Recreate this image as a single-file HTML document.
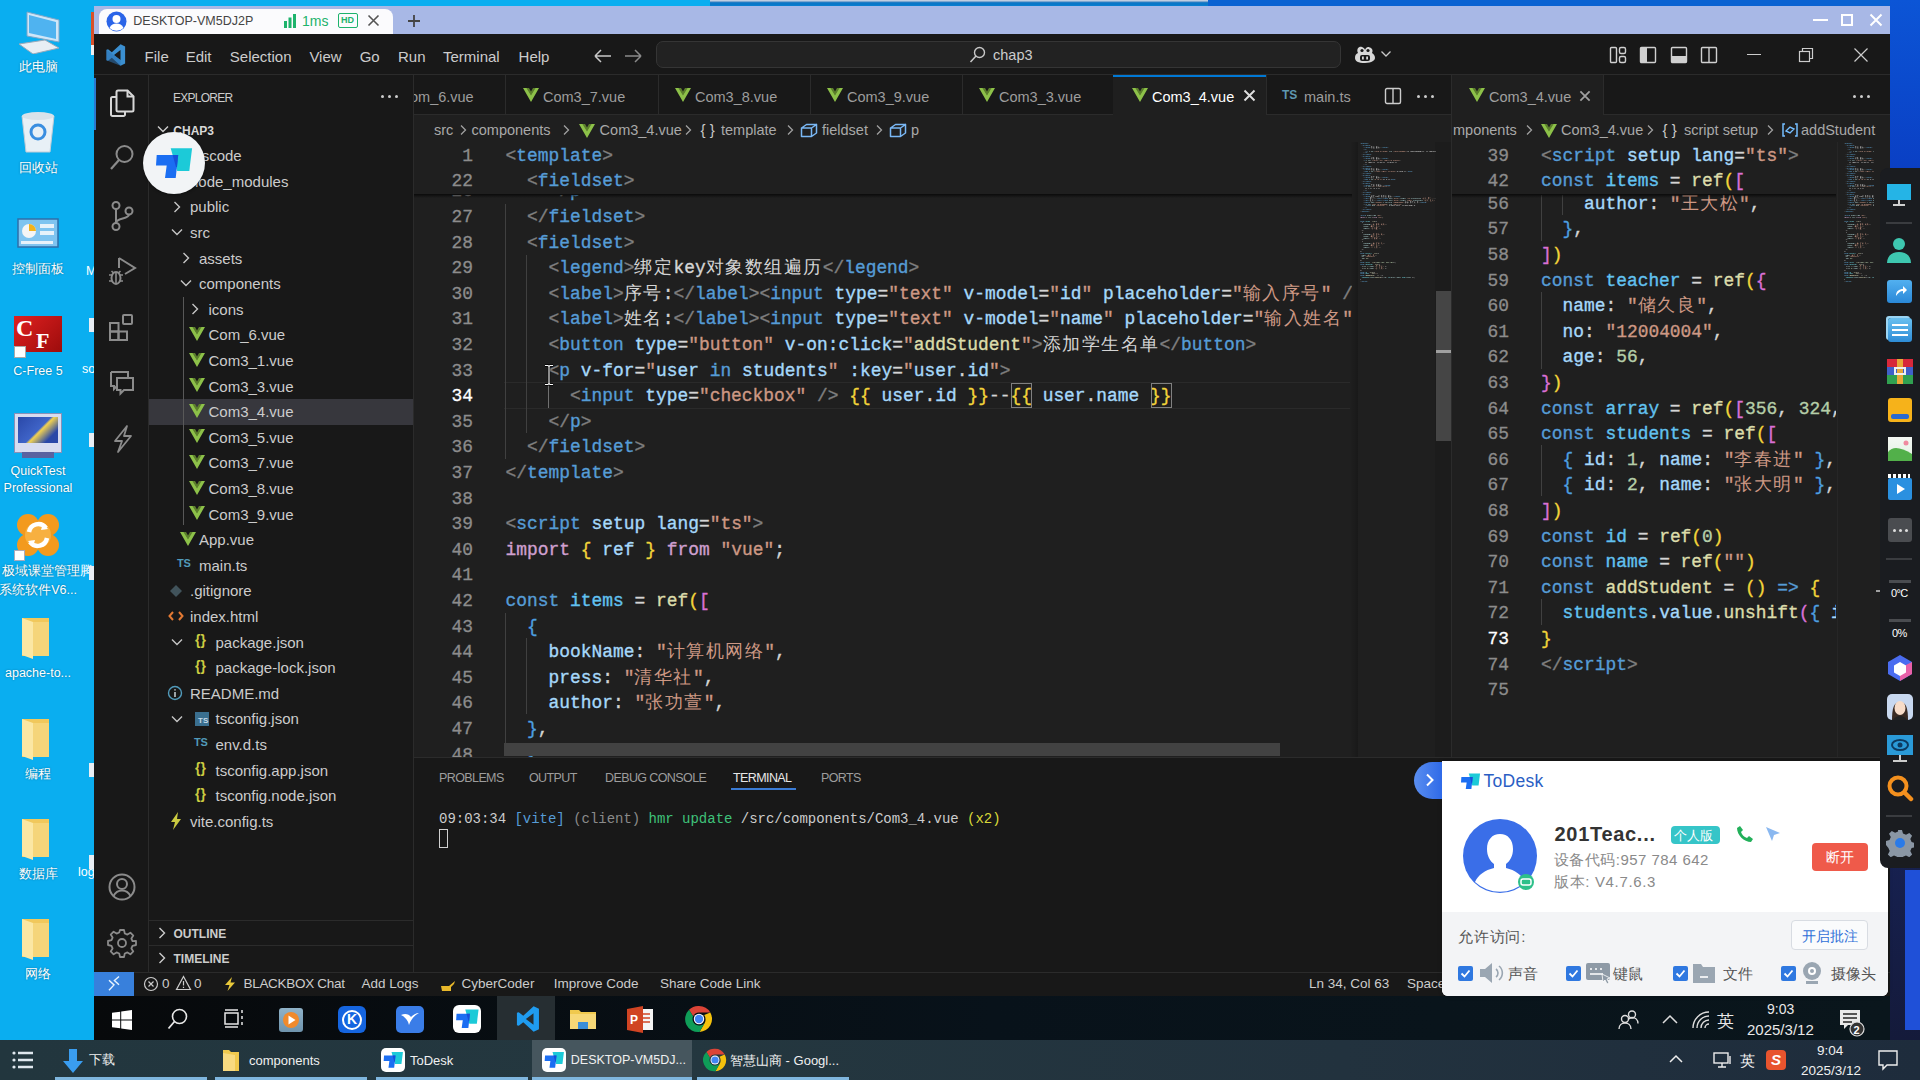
<!DOCTYPE html>
<html><head><meta charset="utf-8">
<style>
*{margin:0;padding:0;box-sizing:border-box}
html,body{width:1920px;height:1080px;overflow:hidden}
body{position:relative;background:#0aaef0;font-family:"Liberation Sans",sans-serif;color:#ccc}
.a{position:absolute}
.t{position:absolute;white-space:pre;line-height:1}
.mono{font-family:"Liberation Mono",monospace}
/* code */
.ln{position:absolute;white-space:pre;font-family:"Liberation Mono",monospace;font-size:17.9px;line-height:25.6px;height:25.6px;color:#d4d4d4;-webkit-text-stroke:0.35px currentColor}
.num{position:absolute;white-space:pre;font-family:"Liberation Mono",monospace;font-size:17.9px;line-height:25.6px;color:#8c8c8c;text-align:right;width:60px;-webkit-text-stroke:0.3px currentColor}
.p{color:#808080}.tg{color:#569cd6}.at{color:#a6d8fa}.s{color:#cd9884}.k{color:#569cd6}.im{color:#d0a0d0}
.v{color:#62c2f0}.f{color:#dcdcaa}.b1{color:#f2d43a}.b2{color:#da70d6}.b3{color:#4d9fe0}.n{color:#b5cea8}.w{color:#d4d4d4}
.c{letter-spacing:1.5px;-webkit-text-stroke:0}
</style></head><body>

<!-- top strip -->
<div class="a" style="left:0;top:0;width:1920px;height:6px;background:#0aaef0"></div>
<div class="a" style="left:710px;top:0;width:498px;height:6px;background:linear-gradient(#c0cee0 0,#c0cee0 1px,#3a80c0 2px,#0a78c8 3px,#0a78c8 5px,#0a84d8 6px)"></div>
<div class="a" style="left:1208px;top:0;width:712px;height:6px;background:#0a62d2"></div>
<div class="a" style="left:1890px;top:0;width:30px;height:170px;background:linear-gradient(#0c55d6,#0a3fc4)"></div>

<!-- ToDesk window top -->
<div class="a" style="left:94px;top:6px;width:1796px;height:28px;background:#a8b8e6"></div>
<div class="a" style="left:99px;top:9px;width:294px;height:25px;background:#fbfbfd;border-radius:8px 8px 0 0"></div>

<svg class="a" style="left:15px;top:10px" width="46" height="44" viewBox="0 0 46 44"><path d="M12 2 44 10v22L12 26z" fill="#cfe6f8" stroke="#7fa6c8"/><path d="M14 5 41 12v17L14 23z" fill="#4fb3f0"/><path d="M4 34 30 30 44 38 18 44z" fill="#e8eef4" stroke="#9ab"/></svg>
<div class="t" style="left:-9px;width:94px;text-align:center;top:60.6px;font-size:12.5px;color:#fff;text-shadow:0 0 2px #0006">此电脑</div>
<svg class="a" style="left:19px;top:108px" width="38" height="46" viewBox="0 0 38 46"><path d="M3 8h32l-4 36H7z" fill="#e8f0f6" stroke="#c2ccd6"/><ellipse cx="19" cy="8" rx="16" ry="4" fill="#d8e2ea"/><circle cx="19" cy="24" r="7" fill="none" stroke="#3a8ee0" stroke-width="3"/></svg>
<div class="t" style="left:-9px;width:94px;text-align:center;top:161.6px;font-size:12.5px;color:#fff;text-shadow:0 0 2px #0006">回收站</div>
<svg class="a" style="left:17px;top:218px" width="42" height="30" viewBox="0 0 42 30"><rect x="1" y="1" width="40" height="28" fill="#7fc4f0" stroke="#2f6fa8" stroke-width="1.5"/><circle cx="12" cy="13" r="7" fill="#f5f5f5"/><path d="M12 13V6a7 7 0 0 1 7 7z" fill="#f2b31c"/><rect x="23" y="6" width="14" height="4" fill="#e8f2fa"/><rect x="23" y="13" width="14" height="4" fill="#e8f2fa"/><rect x="4" y="23" width="32" height="3" fill="#e8f2fa"/></svg>
<div class="t" style="left:-9px;width:94px;text-align:center;top:262.6px;font-size:12.5px;color:#fff;text-shadow:0 0 2px #0006">控制面板</div>
<div class="a" style="left:14px;top:316px;width:48px;height:36px;background:linear-gradient(135deg,#e02020,#9c0c0c)"></div>
<div class="t" style="left:16px;top:316px;font-family:'Liberation Serif',serif;font-size:24px;font-weight:bold;color:#fff">C</div>
<div class="t" style="left:36px;top:330px;font-family:'Liberation Serif',serif;font-size:22px;font-weight:bold;color:#fff">F</div>
<div class="a" style="left:14px;top:346px;width:12px;height:12px;background:#fff;border:1px solid #aaa"></div>
<div class="t" style="left:-9px;width:94px;text-align:center;top:364.6px;font-size:12.5px;color:#fff;text-shadow:0 0 2px #0006">C-Free 5</div>
<div class="t " style="left:82.0px;top:363.4px;font-size:12.5px;color:#fff;">so</div>
<div class="a" style="left:14px;top:413px;width:48px;height:40px;background:#d8dcf0;border:1px solid #8890b8"></div>
<div class="a" style="left:18px;top:417px;width:40px;height:26px;background:linear-gradient(135deg,#2a48a8,#3f64c8 50%,#f2d250 55%,#2a48a8 80%)"></div>
<div class="a" style="left:22px;top:452px;width:32px;height:6px;background:#5a62a0"></div>
<div class="t" style="left:-9px;width:94px;text-align:center;top:464.6px;font-size:12.5px;color:#fff;text-shadow:0 0 2px #0006">QuickTest</div>
<div class="t" style="left:-9px;width:94px;text-align:center;top:481.6px;font-size:12.5px;color:#fff;text-shadow:0 0 2px #0006">Professional</div>
<svg class="a" style="left:14px;top:512px" width="48" height="46" viewBox="0 0 48 46"><g fill="#f39a1e"><circle cx="14" cy="13" r="11"/><circle cx="34" cy="13" r="11"/><circle cx="14" cy="33" r="11"/><circle cx="34" cy="33" r="11"/><circle cx="24" cy="23" r="14"/></g><circle cx="24" cy="23" r="13" fill="#f7b040"/><path d="M15 20a9.5 9.5 0 0 1 17-4M33 26a9.5 9.5 0 0 1-17 4" stroke="#fff" stroke-width="4.5" fill="none"/><path d="M29 11l5 6-7 1zM19 35l-5-6 7-1z" fill="#fff"/></svg>
<div class="a" style="left:14px;top:550px;width:11px;height:11px;background:#fff;border:1px solid #aab"></div>
<div class="t " style="left:2.0px;top:565.4px;font-size:12.5px;color:#fff;text-shadow:0 0 2px #0006">极域课堂管理</div>
<div class="t " style="left:80.0px;top:565.4px;font-size:12.5px;color:#fff;">腾</div>
<div class="t" style="left:-9px;width:94px;text-align:center;top:583.6px;font-size:12.5px;color:#fff;text-shadow:0 0 2px #0006">系统软件V6...</div>
<svg class="a" style="left:21px;top:617px" width="30" height="42" viewBox="0 0 30 42"><path d="M1 1h27v38H1z" fill="#f1c85c"/><path d="M1 1l11 4v37L1 38z" fill="#fbe7a4"/><path d="M12 5h16v34H12z" fill="#f5d57a"/></svg>
<div class="t" style="left:-9px;width:94px;text-align:center;top:666.6px;font-size:12.5px;color:#fff;text-shadow:0 0 2px #0006">apache-to...</div>
<svg class="a" style="left:21px;top:718px" width="30" height="42" viewBox="0 0 30 42"><path d="M1 1h27v38H1z" fill="#f1c85c"/><path d="M1 1l11 4v37L1 38z" fill="#fbe7a4"/><path d="M12 5h16v34H12z" fill="#f5d57a"/></svg>
<div class="t" style="left:-9px;width:94px;text-align:center;top:767.6px;font-size:12.5px;color:#fff;text-shadow:0 0 2px #0006">编程</div>
<svg class="a" style="left:21px;top:818px" width="30" height="42" viewBox="0 0 30 42"><path d="M1 1h27v38H1z" fill="#f1c85c"/><path d="M1 1l11 4v37L1 38z" fill="#fbe7a4"/><path d="M12 5h16v34H12z" fill="#f5d57a"/></svg>
<div class="t" style="left:-9px;width:94px;text-align:center;top:867.6px;font-size:12.5px;color:#fff;text-shadow:0 0 2px #0006">数据库</div>
<svg class="a" style="left:21px;top:918px" width="30" height="42" viewBox="0 0 30 42"><path d="M1 1h27v38H1z" fill="#f1c85c"/><path d="M1 1l11 4v37L1 38z" fill="#fbe7a4"/><path d="M12 5h16v34H12z" fill="#f5d57a"/></svg>
<div class="t" style="left:-9px;width:94px;text-align:center;top:967.6px;font-size:12.5px;color:#fff;text-shadow:0 0 2px #0006">网络</div>
<div class="t " style="left:78.0px;top:866.4px;font-size:12.5px;color:#fff;">log</div>
<div class="a" style="left:91px;top:12px;width:3px;height:38px;background:#d8502a;"></div>
<div class="a" style="left:91px;top:45px;width:3px;height:10px;background:#f0f0f0;"></div>
<div class="a" style="left:89px;top:318px;width:5px;height:14px;background:#e8eef4;"></div>
<div class="a" style="left:89px;top:433px;width:5px;height:14px;background:#e8eef4;"></div>
<div class="a" style="left:89px;top:566px;width:5px;height:14px;background:#e8eef4;"></div>
<div class="a" style="left:89px;top:763px;width:5px;height:14px;background:#e8eef4;"></div>
<div class="a" style="left:89px;top:855px;width:5px;height:14px;background:#e8eef4;"></div>
<div class="t " style="left:86.0px;top:265.4px;font-size:12.5px;color:#fff;">M</div>
<div class="a" style="left:94px;top:34px;width:1796px;height:41px;background:#181818;"></div>
<div class="a" style="left:94px;top:74px;width:1796px;height:1px;background:#2b2b2b;"></div>
<svg class="a" style="left:104px;top:44px" width="22" height="22" viewBox="0 0 100 100">
<path d="M96 10.8 75.4 1 35.6 37.3 18.3 24.2 11.2 26.4v47.2l7.1 2.2 17.3-13.1L75.4 99 96 89.2V10.8zM75 27.8v44.4L45.6 50 75 27.8z" fill="#3b8fd0"/>
<path d="M11.2 26.4 75 72.2v26.8L11.2 73.6z" fill="#2f74b5" opacity=".55"/></svg>
<div class="t " style="left:144.6px;top:48.8px;font-size:15px;color:#cccccc;">File</div>
<div class="t " style="left:185.7px;top:48.8px;font-size:15px;color:#cccccc;">Edit</div>
<div class="t " style="left:229.8px;top:48.8px;font-size:15px;color:#cccccc;">Selection</div>
<div class="t " style="left:309.4px;top:48.8px;font-size:15px;color:#cccccc;">View</div>
<div class="t " style="left:359.7px;top:48.8px;font-size:15px;color:#cccccc;">Go</div>
<div class="t " style="left:398.0px;top:48.8px;font-size:15px;color:#cccccc;">Run</div>
<div class="t " style="left:443.0px;top:48.8px;font-size:15px;color:#cccccc;">Terminal</div>
<div class="t " style="left:518.6px;top:48.8px;font-size:15px;color:#cccccc;">Help</div>
<svg class="a" style="left:592px;top:46px" width="22" height="20" viewBox="0 0 22 20"><path d="M3 10h16M3 10l6-6M3 10l6 6" stroke="#c8c8c8" stroke-width="1.5" fill="none"/></svg>
<svg class="a" style="left:622px;top:46px" width="22" height="20" viewBox="0 0 22 20"><path d="M3 10h16M19 10l-6-6M19 10l-6 6" stroke="#8a8a8a" stroke-width="1.5" fill="none"/></svg>
<div class="a" style="left:656px;top:41px;width:685px;height:27px;background:#222222;border:1px solid #353535;border-radius:7px"></div>
<svg class="a" style="left:969px;top:46px" width="17" height="18" viewBox="0 0 17 18"><circle cx="10.5" cy="6.5" r="5" stroke="#c8c8c8" stroke-width="1.4" fill="none"/><path d="M7 10 1.5 16" stroke="#c8c8c8" stroke-width="1.5"/></svg>
<div class="t " style="left:993.0px;top:48.2px;font-size:14.5px;color:#cccccc;">chap3</div>
<svg class="a" style="left:1354px;top:45px" width="22" height="20" viewBox="0 0 22 20"><path d="M4 8C2 4 5 1 8 2s3 3 3 3 1-3 3-3 6 2 4 6c2 1 3 3 3 5s-3 5-10 5-10-2-10-5 1-4 3-5z" fill="#d8d8d8"/><rect x="6" y="10" width="10" height="6" rx="2" fill="#181818"/><rect x="8" y="11.5" width="1.8" height="3" fill="#d8d8d8"/><rect x="12.2" y="11.5" width="1.8" height="3" fill="#d8d8d8"/><circle cx="8" cy="5.5" r="1.6" fill="#181818"/><circle cx="14" cy="5.5" r="1.6" fill="#181818"/></svg>
<svg class="a" style="left:1380px;top:50px" width="12" height="8" viewBox="0 0 12 8"><path d="M1.5 1.5 6 6l4.5-4.5" stroke="#c8c8c8" stroke-width="1.3" fill="none"/></svg>
<svg class="a" style="left:1608px;top:45px" width="20" height="20" viewBox="0 0 20 20"><rect x="2.5" y="2.5" width="6" height="15" rx="1" stroke="#d0d0d0" stroke-width="1.4" fill="none"/><rect x="11.5" y="2.5" width="6" height="6" rx="1.5" stroke="#d0d0d0" stroke-width="1.4" fill="none"/><rect x="11.5" y="11.5" width="6" height="6" rx="1.5" stroke="#d0d0d0" stroke-width="1.4" fill="none"/></svg>
<svg class="a" style="left:1638px;top:45px" width="20" height="20" viewBox="0 0 20 20"><rect x="2.5" y="2.5" width="15" height="15" rx="1" stroke="#d0d0d0" stroke-width="1.4" fill="none"/><rect x="2.5" y="2.5" width="6.5" height="15" fill="#d0d0d0"/></svg>
<svg class="a" style="left:1669px;top:45px" width="20" height="20" viewBox="0 0 20 20"><rect x="2.5" y="2.5" width="15" height="15" rx="1" stroke="#d0d0d0" stroke-width="1.4" fill="none"/><rect x="2.5" y="11" width="15" height="6.5" fill="#d0d0d0"/></svg>
<svg class="a" style="left:1699px;top:45px" width="20" height="20" viewBox="0 0 20 20"><rect x="2.5" y="2.5" width="15" height="15" rx="1" stroke="#d0d0d0" stroke-width="1.4" fill="none"/><path d="M10 2.5v15" stroke="#d0d0d0" stroke-width="1.4"/></svg>
<div class="a" style="left:1747px;top:54px;width:14px;height:1px;background:#cccccc;"></div>
<svg class="a" style="left:1798px;top:47px" width="16" height="16" viewBox="0 0 16 16"><rect x="1.5" y="4.5" width="10" height="10" stroke="#cccccc" stroke-width="1.2" fill="none"/><path d="M4.5 4.5V1.5h10v10h-3" stroke="#cccccc" stroke-width="1.2" fill="none"/></svg>
<svg class="a" style="left:1853px;top:47px" width="16" height="16" viewBox="0 0 16 16"><path d="M1.5 1.5l13 13M14.5 1.5l-13 13" stroke="#cccccc" stroke-width="1.2"/></svg>
<div class="a" style="left:94px;top:75px;width:55px;height:897px;background:#181818;"></div>
<div class="a" style="left:148px;top:75px;width:1px;height:897px;background:#2b2b2b;"></div>
<div class="a" style="left:94px;top:78px;width:2px;height:52px;background:#2a78d0;"></div>
<svg class="a" style="left:108px;top:88px" width="28" height="30" viewBox="0 0 28 30"><path d="M9 9H4.5a1.5 1.5 0 0 0-1.5 1.5v16A1.5 1.5 0 0 0 4.5 28h11a1.5 1.5 0 0 0 1.5-1.5V24" stroke="#d7d7d7" stroke-width="2" fill="none"/><path d="M9.5 2.5h10l6 6v13.5a1.5 1.5 0 0 1-1.5 1.5h-14a1.5 1.5 0 0 1-1.5-1.5V4a1.5 1.5 0 0 1 1.5-1.5z" stroke="#d7d7d7" stroke-width="2" fill="none"/><path d="M19.5 2.5v6h6" stroke="#d7d7d7" stroke-width="2" fill="none"/></svg>
<svg class="a" style="left:108px;top:143px" width="28" height="30" viewBox="0 0 28 30"><circle cx="16.5" cy="11" r="8" stroke="#8b8b8b" stroke-width="2" fill="none"/><path d="M11 17 3 26" stroke="#8b8b8b" stroke-width="2.2"/></svg>
<svg class="a" style="left:108px;top:200px" width="28" height="32" viewBox="0 0 28 32"><circle cx="8" cy="5.5" r="3.5" stroke="#8b8b8b" stroke-width="2" fill="none"/><circle cx="8" cy="26.5" r="3.5" stroke="#8b8b8b" stroke-width="2" fill="none"/><circle cx="21" cy="11" r="3.5" stroke="#8b8b8b" stroke-width="2" fill="none"/><path d="M8 9v14M21 14.5c0 5-13 3-13 8.5" stroke="#8b8b8b" stroke-width="2" fill="none"/></svg>
<svg class="a" style="left:107px;top:255px" width="30" height="32" viewBox="0 0 30 32"><path d="M12 3v10M12 3l16 10-10 6" stroke="#8b8b8b" stroke-width="2" fill="none"/><ellipse cx="9" cy="23" rx="4.5" ry="6" stroke="#8b8b8b" stroke-width="2" fill="none"/><path d="M2 20h3M13 20h3M2 26h3M13 26h3M4.5 16l2 2M13.5 16l-2 2M9 17v12" stroke="#8b8b8b" stroke-width="1.6"/></svg>
<svg class="a" style="left:108px;top:313px" width="28" height="30" viewBox="0 0 28 30"><rect x="2" y="10" width="8.5" height="8.5" stroke="#8b8b8b" stroke-width="2" fill="none"/><rect x="2" y="18.5" width="8.5" height="8.5" stroke="#8b8b8b" stroke-width="2" fill="none"/><rect x="10.5" y="18.5" width="8.5" height="8.5" stroke="#8b8b8b" stroke-width="2" fill="none"/><rect x="15" y="2" width="9" height="9" rx="1" stroke="#8b8b8b" stroke-width="2" fill="none"/></svg>
<svg class="a" style="left:108px;top:369px" width="28" height="30" viewBox="0 0 28 30"><path d="M3 3h17v5M3 3v14h3v3l3-3" stroke="#8b8b8b" stroke-width="2" fill="none"/><path d="M9 9h16v12H16l-3.5 3.5V21H9z" stroke="#8b8b8b" stroke-width="2" fill="none"/></svg>
<svg class="a" style="left:110px;top:424px" width="26" height="30" viewBox="0 0 26 30"><path d="M17 2 5 17h7l-4 11 13-16h-7z" stroke="#8b8b8b" stroke-width="1.8" fill="none" stroke-linejoin="round"/></svg>
<svg class="a" style="left:107px;top:872px" width="30" height="30" viewBox="0 0 30 30"><circle cx="15" cy="15" r="12.5" stroke="#8b8b8b" stroke-width="2" fill="none"/><circle cx="15" cy="12" r="5" stroke="#8b8b8b" stroke-width="2" fill="none"/><path d="M6.5 24c2-4 5-5.5 8.5-5.5s6.5 1.5 8.5 5.5" stroke="#8b8b8b" stroke-width="2" fill="none"/></svg>
<svg class="a" style="left:107px;top:928px" width="30" height="30" viewBox="0 0 30 30"><path d="M13 2h4l.8 3.5 2.6 1.1 3-1.9 2.9 2.9-1.9 3 1.1 2.6L29 13v4l-3.5.8-1.1 2.6 1.9 3-2.9 2.9-3-1.9-2.6 1.1L17 29h-4l-.8-3.5-2.6-1.1-3 1.9-2.9-2.9 1.9-3-1.1-2.6L1 17v-4l3.5-.8 1.1-2.6-1.9-3 2.9-2.9 3 1.9 2.6-1.1z" stroke="#8b8b8b" stroke-width="1.8" fill="none" stroke-linejoin="round"/><circle cx="15" cy="15" r="4" stroke="#8b8b8b" stroke-width="1.8" fill="none"/></svg>
<div class="a" style="left:149px;top:75px;width:265px;height:897px;background:#181818;"></div>
<div class="a" style="left:413px;top:75px;width:1px;height:897px;background:#2b2b2b;"></div>
<div class="t " style="left:173.0px;top:91.6px;font-size:12px;color:#cccccc;letter-spacing:-0.75px;">EXPLORER</div>
<div class="a" style="left:381px;top:95px;width:3px;height:3px;background:#cccccc;border-radius:50%"></div>
<div class="a" style="left:388px;top:95px;width:3px;height:3px;background:#cccccc;border-radius:50%"></div>
<div class="a" style="left:395px;top:95px;width:3px;height:3px;background:#cccccc;border-radius:50%"></div>
<svg class="a" style="left:155px;top:124px" width="16" height="10" viewBox="0 0 16 10"><path d="M3 2.5 8 7.5 13 2.5" stroke="#cccccc" stroke-width="1.4" fill="none"/></svg>
<div class="t " style="left:173.3px;top:125.0px;font-size:12px;color:#d8d8d8;font-weight:bold;">CHAP3</div>
<div class="a" style="left:149px;top:399px;width:264px;height:26px;background:#37373d;"></div>
<div class="a" style="left:183px;top:297px;width:1px;height:228px;background:#585858;"></div>
<svg class="a" style="left:172px;top:147.3px" width="10" height="16" viewBox="0 0 10 16"><path d="M2.5 3 7.5 8 2.5 13" stroke="#c5c5c5" stroke-width="1.4" fill="none"/></svg>
<div class="t " style="left:190.0px;top:148.1px;font-size:15px;color:#cccccc;">.vscode</div>
<svg class="a" style="left:172px;top:172.9px" width="10" height="16" viewBox="0 0 10 16"><path d="M2.5 3 7.5 8 2.5 13" stroke="#c5c5c5" stroke-width="1.4" fill="none"/></svg>
<div class="t " style="left:190.0px;top:173.7px;font-size:15px;color:#cccccc;">node_modules</div>
<svg class="a" style="left:172px;top:198.5px" width="10" height="16" viewBox="0 0 10 16"><path d="M2.5 3 7.5 8 2.5 13" stroke="#c5c5c5" stroke-width="1.4" fill="none"/></svg>
<div class="t " style="left:190.0px;top:199.3px;font-size:15px;color:#cccccc;">public</div>
<svg class="a" style="left:169px;top:227.10000000000002px" width="16" height="10" viewBox="0 0 16 10"><path d="M3 2.5 8 7.5 13 2.5" stroke="#c5c5c5" stroke-width="1.4" fill="none"/></svg>
<div class="t " style="left:190.0px;top:224.9px;font-size:15px;color:#cccccc;">src</div>
<svg class="a" style="left:181px;top:249.70000000000005px" width="10" height="16" viewBox="0 0 10 16"><path d="M2.5 3 7.5 8 2.5 13" stroke="#c5c5c5" stroke-width="1.4" fill="none"/></svg>
<div class="t " style="left:199.0px;top:250.5px;font-size:15px;color:#cccccc;">assets</div>
<svg class="a" style="left:178px;top:278.3px" width="16" height="10" viewBox="0 0 16 10"><path d="M3 2.5 8 7.5 13 2.5" stroke="#c5c5c5" stroke-width="1.4" fill="none"/></svg>
<div class="t " style="left:199.0px;top:276.1px;font-size:15px;color:#cccccc;">components</div>
<svg class="a" style="left:190px;top:300.90000000000003px" width="10" height="16" viewBox="0 0 10 16"><path d="M2.5 3 7.5 8 2.5 13" stroke="#c5c5c5" stroke-width="1.4" fill="none"/></svg>
<div class="t " style="left:208.5px;top:301.7px;font-size:15px;color:#cccccc;">icons</div>
<svg class="a" style="left:189px;top:327.0px" width="16" height="15" viewBox="0 0 16 15"><path d="M0 0h4.2L8 6.4 11.8 0H16L8 14z" fill="#8dc149"/><path d="M3.4 0h2.6L8 3.4 10 0h2.6L8 7.6z" fill="#5c7f2c"/></svg>
<div class="t " style="left:208.5px;top:327.3px;font-size:15px;color:#cccccc;">Com_6.vue</div>
<svg class="a" style="left:189px;top:352.6px" width="16" height="15" viewBox="0 0 16 15"><path d="M0 0h4.2L8 6.4 11.8 0H16L8 14z" fill="#8dc149"/><path d="M3.4 0h2.6L8 3.4 10 0h2.6L8 7.6z" fill="#5c7f2c"/></svg>
<div class="t " style="left:208.5px;top:352.9px;font-size:15px;color:#cccccc;">Com3_1.vue</div>
<svg class="a" style="left:189px;top:378.20000000000005px" width="16" height="15" viewBox="0 0 16 15"><path d="M0 0h4.2L8 6.4 11.8 0H16L8 14z" fill="#8dc149"/><path d="M3.4 0h2.6L8 3.4 10 0h2.6L8 7.6z" fill="#5c7f2c"/></svg>
<div class="t " style="left:208.5px;top:378.5px;font-size:15px;color:#cccccc;">Com3_3.vue</div>
<svg class="a" style="left:189px;top:403.8px" width="16" height="15" viewBox="0 0 16 15"><path d="M0 0h4.2L8 6.4 11.8 0H16L8 14z" fill="#8dc149"/><path d="M3.4 0h2.6L8 3.4 10 0h2.6L8 7.6z" fill="#5c7f2c"/></svg>
<div class="t " style="left:208.5px;top:404.1px;font-size:15px;color:#cccccc;">Com3_4.vue</div>
<svg class="a" style="left:189px;top:429.40000000000003px" width="16" height="15" viewBox="0 0 16 15"><path d="M0 0h4.2L8 6.4 11.8 0H16L8 14z" fill="#8dc149"/><path d="M3.4 0h2.6L8 3.4 10 0h2.6L8 7.6z" fill="#5c7f2c"/></svg>
<div class="t " style="left:208.5px;top:429.7px;font-size:15px;color:#cccccc;">Com3_5.vue</div>
<svg class="a" style="left:189px;top:455.00000000000006px" width="16" height="15" viewBox="0 0 16 15"><path d="M0 0h4.2L8 6.4 11.8 0H16L8 14z" fill="#8dc149"/><path d="M3.4 0h2.6L8 3.4 10 0h2.6L8 7.6z" fill="#5c7f2c"/></svg>
<div class="t " style="left:208.5px;top:455.3px;font-size:15px;color:#cccccc;">Com3_7.vue</div>
<svg class="a" style="left:189px;top:480.6px" width="16" height="15" viewBox="0 0 16 15"><path d="M0 0h4.2L8 6.4 11.8 0H16L8 14z" fill="#8dc149"/><path d="M3.4 0h2.6L8 3.4 10 0h2.6L8 7.6z" fill="#5c7f2c"/></svg>
<div class="t " style="left:208.5px;top:480.9px;font-size:15px;color:#cccccc;">Com3_8.vue</div>
<svg class="a" style="left:189px;top:506.20000000000005px" width="16" height="15" viewBox="0 0 16 15"><path d="M0 0h4.2L8 6.4 11.8 0H16L8 14z" fill="#8dc149"/><path d="M3.4 0h2.6L8 3.4 10 0h2.6L8 7.6z" fill="#5c7f2c"/></svg>
<div class="t " style="left:208.5px;top:506.5px;font-size:15px;color:#cccccc;">Com3_9.vue</div>
<svg class="a" style="left:180px;top:531.8px" width="16" height="15" viewBox="0 0 16 15"><path d="M0 0h4.2L8 6.4 11.8 0H16L8 14z" fill="#8dc149"/><path d="M3.4 0h2.6L8 3.4 10 0h2.6L8 7.6z" fill="#5c7f2c"/></svg>
<div class="t " style="left:199.0px;top:532.1px;font-size:15px;color:#cccccc;">App.vue</div>
<div class="t" style="left:177px;top:557.9000000000001px;font-size:11px;font-weight:bold;color:#519aba;letter-spacing:-0.3px">TS</div>
<div class="t " style="left:199.0px;top:557.7px;font-size:15px;color:#cccccc;">main.ts</div>
<svg class="a" style="left:169px;top:583.5px" width="14" height="14" viewBox="0 0 14 14"><path d="M7 1 13 7 7 13 1 7z" fill="#41535b"/></svg>
<div class="t " style="left:190.0px;top:583.3px;font-size:15px;color:#cccccc;">.gitignore</div>
<svg class="a" style="left:168px;top:610.1px" width="16" height="12" viewBox="0 0 16 12"><path d="M5 2 1.5 6 5 10M11 2l3.5 4L11 10" stroke="#e37933" stroke-width="2" fill="none"/></svg>
<div class="t " style="left:190.0px;top:608.9px;font-size:15px;color:#cccccc;">index.html</div>
<svg class="a" style="left:169px;top:636.7px" width="16" height="10" viewBox="0 0 16 10"><path d="M3 2.5 8 7.5 13 2.5" stroke="#c5c5c5" stroke-width="1.4" fill="none"/></svg>
<div class="t" style="left:195px;top:633.2px;font-size:14px;font-weight:bold;color:#cbcb41">{}</div>
<div class="t " style="left:215.5px;top:634.5px;font-size:15px;color:#cccccc;">package.json</div>
<div class="t" style="left:195px;top:658.8px;font-size:14px;font-weight:bold;color:#cbcb41">{}</div>
<div class="t " style="left:215.5px;top:660.1px;font-size:15px;color:#cccccc;">package-lock.json</div>
<svg class="a" style="left:167px;top:684.9px" width="16" height="16" viewBox="0 0 16 16"><circle cx="8" cy="8" r="6.5" stroke="#519aba" stroke-width="1.4" fill="none"/><path d="M8 7v5M8 4.2v1.3" stroke="#c0c8cc" stroke-width="1.6"/></svg>
<div class="t " style="left:190.0px;top:685.7px;font-size:15px;color:#cccccc;">README.md</div>
<svg class="a" style="left:169px;top:713.5px" width="16" height="10" viewBox="0 0 16 10"><path d="M3 2.5 8 7.5 13 2.5" stroke="#c5c5c5" stroke-width="1.4" fill="none"/></svg>
<div class="a" style="left:195px;top:711.5px;width:14px;height:14px;background:#3a6f8f"><div class="t" style="left:3px;top:5px;font-size:8px;font-weight:bold;color:#c6dbe8">TS</div></div>
<div class="t " style="left:215.5px;top:711.3px;font-size:15px;color:#cccccc;">tsconfig.json</div>
<div class="t" style="left:194px;top:737.1000000000001px;font-size:11px;font-weight:bold;color:#519aba;letter-spacing:-0.3px">TS</div>
<div class="t " style="left:215.5px;top:736.9px;font-size:15px;color:#cccccc;">env.d.ts</div>
<div class="t" style="left:195px;top:761.2px;font-size:14px;font-weight:bold;color:#cbcb41">{}</div>
<div class="t " style="left:215.5px;top:762.5px;font-size:15px;color:#cccccc;">tsconfig.app.json</div>
<div class="t" style="left:195px;top:786.8px;font-size:14px;font-weight:bold;color:#cbcb41">{}</div>
<div class="t " style="left:215.5px;top:788.1px;font-size:15px;color:#cccccc;">tsconfig.node.json</div>
<svg class="a" style="left:170px;top:811.9px" width="12" height="18" viewBox="0 0 12 18"><path d="M8 0 1 10h4l-2 8 8-11H7z" fill="#cbcb41"/></svg>
<div class="t " style="left:190.0px;top:813.7px;font-size:15px;color:#cccccc;">vite.config.ts</div>
<div class="a" style="left:149px;top:920px;width:264px;height:1px;background:#2b2b2b;"></div>
<div class="a" style="left:149px;top:945px;width:264px;height:1px;background:#2b2b2b;"></div>
<svg class="a" style="left:157px;top:924.5px" width="10" height="16" viewBox="0 0 10 16"><path d="M2.5 3 7.5 8 2.5 13" stroke="#cccccc" stroke-width="1.4" fill="none"/></svg>
<div class="t " style="left:173.5px;top:927.8px;font-size:12px;color:#cccccc;font-weight:bold;">OUTLINE</div>
<svg class="a" style="left:157px;top:950px" width="10" height="16" viewBox="0 0 10 16"><path d="M2.5 3 7.5 8 2.5 13" stroke="#cccccc" stroke-width="1.4" fill="none"/></svg>
<div class="t " style="left:173.5px;top:953.3px;font-size:12px;color:#cccccc;font-weight:bold;">TIMELINE</div>
<div class="a" style="left:414px;top:75px;width:1038px;height:40px;background:#181818;"></div>
<div class="a" style="left:414px;top:114px;width:1038px;height:1px;background:#2b2b2b;"></div>
<div class="a" style="left:505px;top:75px;width:1px;height:40px;background:#2b2b2b;"></div>
<div class="a" style="left:414px;top:75px;width:91px;height:40px;overflow:hidden"><div class="t " style="left:-4.0px;top:15.0px;font-size:14.5px;color:#9d9d9d;">om_6.vue</div>
</div><div class="a" style="left:658px;top:75px;width:1px;height:40px;background:#2b2b2b;"></div>
<svg class="a" style="left:523px;top:88px" width="16" height="15" viewBox="0 0 16 15"><path d="M0 0h4.2L8 6.4 11.8 0H16L8 14z" fill="#8dc149"/><path d="M3.4 0h2.6L8 3.4 10 0h2.6L8 7.6z" fill="#5c7f2c"/></svg>
<div class="t " style="left:543.0px;top:90.0px;font-size:14.5px;color:#9d9d9d;">Com3_7.vue</div>
<div class="a" style="left:810px;top:75px;width:1px;height:40px;background:#2b2b2b;"></div>
<svg class="a" style="left:675px;top:88px" width="16" height="15" viewBox="0 0 16 15"><path d="M0 0h4.2L8 6.4 11.8 0H16L8 14z" fill="#8dc149"/><path d="M3.4 0h2.6L8 3.4 10 0h2.6L8 7.6z" fill="#5c7f2c"/></svg>
<div class="t " style="left:695.0px;top:90.0px;font-size:14.5px;color:#9d9d9d;">Com3_8.vue</div>
<div class="a" style="left:962px;top:75px;width:1px;height:40px;background:#2b2b2b;"></div>
<svg class="a" style="left:827px;top:88px" width="16" height="15" viewBox="0 0 16 15"><path d="M0 0h4.2L8 6.4 11.8 0H16L8 14z" fill="#8dc149"/><path d="M3.4 0h2.6L8 3.4 10 0h2.6L8 7.6z" fill="#5c7f2c"/></svg>
<div class="t " style="left:847.0px;top:90.0px;font-size:14.5px;color:#9d9d9d;">Com3_9.vue</div>
<div class="a" style="left:1113px;top:75px;width:1px;height:40px;background:#2b2b2b;"></div>
<svg class="a" style="left:979px;top:88px" width="16" height="15" viewBox="0 0 16 15"><path d="M0 0h4.2L8 6.4 11.8 0H16L8 14z" fill="#8dc149"/><path d="M3.4 0h2.6L8 3.4 10 0h2.6L8 7.6z" fill="#5c7f2c"/></svg>
<div class="t " style="left:999.0px;top:90.0px;font-size:14.5px;color:#9d9d9d;">Com3_3.vue</div>
<div class="a" style="left:1113px;top:75px;width:153px;height:40px;background:#1f1f1f;"></div>
<div class="a" style="left:1113px;top:75px;width:153px;height:2px;background:#0078d4;"></div>
<div class="a" style="left:1266px;top:75px;width:1px;height:40px;background:#2b2b2b;"></div>
<svg class="a" style="left:1132px;top:88px" width="16" height="15" viewBox="0 0 16 15"><path d="M0 0h4.2L8 6.4 11.8 0H16L8 14z" fill="#8dc149"/><path d="M3.4 0h2.6L8 3.4 10 0h2.6L8 7.6z" fill="#5c7f2c"/></svg>
<div class="t " style="left:1152.0px;top:90.0px;font-size:14.5px;color:#ffffff;">Com3_4.vue</div>
<svg class="a" style="left:1243px;top:89px" width="13" height="13" viewBox="0 0 13 13"><path d="M1.5 1.5l10 10M11.5 1.5l-10 10" stroke="#e0e0e0" stroke-width="1.9"/></svg>
<div class="t" style="left:1282px;top:89px;font-size:12px;font-weight:bold;color:#5f98b0">TS</div>
<div class="t " style="left:1304.0px;top:90.0px;font-size:14.5px;color:#9d9d9d;">main.ts</div>
<svg class="a" style="left:1384px;top:87px" width="18" height="18" viewBox="0 0 18 18"><rect x="1.5" y="1.5" width="15" height="15" rx="1.5" stroke="#cccccc" stroke-width="1.4" fill="none"/><path d="M9 1.5v15" stroke="#cccccc" stroke-width="1.4"/></svg>
<div class="a" style="left:1417px;top:95px;width:3px;height:3px;background:#cccccc;border-radius:50%"></div>
<div class="a" style="left:1424px;top:95px;width:3px;height:3px;background:#cccccc;border-radius:50%"></div>
<div class="a" style="left:1431px;top:95px;width:3px;height:3px;background:#cccccc;border-radius:50%"></div>
<div class="a" style="left:414px;top:115px;width:1038px;height:645px;background:#1f1f1f;"></div>
<div class="t " style="left:434.0px;top:123.3px;font-size:14.5px;color:#a9a9a9;">src</div>
<svg class="a" style="left:459px;top:123px" width="9" height="14" viewBox="0 0 9 14"><path d="M2 2.5 6.5 7 2 11.5" stroke="#a0a0a0" stroke-width="1.3" fill="none"/></svg>
<div class="t " style="left:471.5px;top:123.3px;font-size:14.5px;color:#a9a9a9;">components</div>
<svg class="a" style="left:562px;top:123px" width="9" height="14" viewBox="0 0 9 14"><path d="M2 2.5 6.5 7 2 11.5" stroke="#a0a0a0" stroke-width="1.3" fill="none"/></svg>
<svg class="a" style="left:579px;top:124px" width="16" height="15" viewBox="0 0 16 15"><path d="M0 0h4.2L8 6.4 11.8 0H16L8 14z" fill="#8dc149"/><path d="M3.4 0h2.6L8 3.4 10 0h2.6L8 7.6z" fill="#5c7f2c"/></svg>
<div class="t " style="left:599.6px;top:123.3px;font-size:14.5px;color:#a9a9a9;">Com3_4.vue</div>
<svg class="a" style="left:684px;top:123px" width="9" height="14" viewBox="0 0 9 14"><path d="M2 2.5 6.5 7 2 11.5" stroke="#a0a0a0" stroke-width="1.3" fill="none"/></svg>
<div class="t " style="left:700.5px;top:122.4px;font-size:15px;color:#c8c8c8;letter-spacing:0px;">{ }</div>
<div class="t " style="left:721.0px;top:123.3px;font-size:14.5px;color:#a9a9a9;">template</div>
<svg class="a" style="left:786px;top:123px" width="9" height="14" viewBox="0 0 9 14"><path d="M2 2.5 6.5 7 2 11.5" stroke="#a0a0a0" stroke-width="1.3" fill="none"/></svg>
<svg class="a" style="left:800px;top:122.5px" width="18" height="15" viewBox="0 0 18 15"><path d="M1.5 5 6.5 1.5H16.5L11.5 5zM1.5 5H11.5V13.5H1.5zM11.5 5 16.5 1.5V10L11.5 13.5" stroke="#7ab8f5" stroke-width="1.5" fill="none" stroke-linejoin="round"/></svg>
<div class="t " style="left:822.0px;top:123.3px;font-size:14.5px;color:#a9a9a9;">fieldset</div>
<svg class="a" style="left:875px;top:123px" width="9" height="14" viewBox="0 0 9 14"><path d="M2 2.5 6.5 7 2 11.5" stroke="#a0a0a0" stroke-width="1.3" fill="none"/></svg>
<svg class="a" style="left:889px;top:122.5px" width="18" height="15" viewBox="0 0 18 15"><path d="M1.5 5 6.5 1.5H16.5L11.5 5zM1.5 5H11.5V13.5H1.5zM11.5 5 16.5 1.5V10L11.5 13.5" stroke="#7ab8f5" stroke-width="1.5" fill="none" stroke-linejoin="round"/></svg>
<div class="t " style="left:911.0px;top:123.3px;font-size:14.5px;color:#a9a9a9;">p</div>
<div class="num" style="left:413px;top:204.9px;">27</div>
<div class="ln" style="left:505.6px;top:204.9px">  <span class="p">&lt;/</span><span class="tg">fieldset</span><span class="p">&gt;</span></div>
<div class="num" style="left:413px;top:230.5px;">28</div>
<div class="ln" style="left:505.6px;top:230.5px">  <span class="p">&lt;</span><span class="tg">fieldset</span><span class="p">&gt;</span></div>
<div class="num" style="left:413px;top:256.1px;">29</div>
<div class="ln" style="left:505.6px;top:256.1px">    <span class="p">&lt;</span><span class="tg">legend</span><span class="p">&gt;</span><span class="c">绑定</span>key<span class="c">对象数组遍历</span><span class="p">&lt;/</span><span class="tg">legend</span><span class="p">&gt;</span></div>
<div class="num" style="left:413px;top:281.7px;">30</div>
<div class="ln" style="left:505.6px;top:281.7px">    <span class="p">&lt;</span><span class="tg">label</span><span class="p">&gt;</span><span class="c">序号</span>:<span class="p">&lt;/</span><span class="tg">label</span><span class="p">&gt;&lt;</span><span class="tg">input</span> <span class="at">type</span>=<span class="s">"text"</span> <span class="at">v-model</span>=<span class="s">"</span><span class="at">id</span><span class="s">"</span> <span class="at">placeholder</span>=<span class="s">"<span class="c">输入序号</span>"</span> <span class="p">/&gt;</span></div>
<div class="num" style="left:413px;top:307.3px;">31</div>
<div class="ln" style="left:505.6px;top:307.3px">    <span class="p">&lt;</span><span class="tg">label</span><span class="p">&gt;</span><span class="c">姓名</span>:<span class="p">&lt;/</span><span class="tg">label</span><span class="p">&gt;&lt;</span><span class="tg">input</span> <span class="at">type</span>=<span class="s">"text"</span> <span class="at">v-model</span>=<span class="s">"</span><span class="at">name</span><span class="s">"</span> <span class="at">placeholder</span>=<span class="s">"<span class="c">输入姓名</span>"</span> <span class="p">/&gt;</span></div>
<div class="num" style="left:413px;top:332.9px;">32</div>
<div class="ln" style="left:505.6px;top:332.9px">    <span class="p">&lt;</span><span class="tg">button</span> <span class="at">type</span>=<span class="s">"button"</span> <span class="at">v-on:click</span>=<span class="s">"</span><span class="f">addStudent</span><span class="s">"</span><span class="p">&gt;</span><span class="c">添加学生名单</span><span class="p">&lt;/</span><span class="tg">button</span><span class="p">&gt;</span></div>
<div class="num" style="left:413px;top:358.5px;">33</div>
<div class="ln" style="left:505.6px;top:358.5px">    <span class="p">&lt;</span><span class="tg">p</span> <span class="at">v-for</span>=<span class="s">"</span><span class="at">user</span> <span class="k">in</span> <span class="at">students</span><span class="s">"</span> <span class="at">:key</span>=<span class="s">"</span><span class="at">user</span>.<span class="at">id</span><span class="s">"</span><span class="p">&gt;</span></div>
<div class="num" style="left:413px;top:384.1px;color:#ffffff;">34</div>
<div class="ln" style="left:505.6px;top:384.1px">      <span class="p">&lt;</span><span class="tg">input</span> <span class="at">type</span>=<span class="s">"checkbox"</span> <span class="p">/&gt;</span> <span class="b1">{{</span> <span class="at">user</span>.<span class="at">id</span> <span class="b1">}}</span>--<span class="b1">{{</span> <span class="at">user</span>.<span class="at">name</span> <span class="b1">}}</span></div>
<div class="num" style="left:413px;top:409.7px;">35</div>
<div class="ln" style="left:505.6px;top:409.7px">    <span class="p">&lt;/</span><span class="tg">p</span><span class="p">&gt;</span></div>
<div class="num" style="left:413px;top:435.3px;">36</div>
<div class="ln" style="left:505.6px;top:435.3px">  <span class="p">&lt;/</span><span class="tg">fieldset</span><span class="p">&gt;</span></div>
<div class="num" style="left:413px;top:460.9px;">37</div>
<div class="ln" style="left:505.6px;top:460.9px"><span class="p">&lt;/</span><span class="tg">template</span><span class="p">&gt;</span></div>
<div class="num" style="left:413px;top:486.5px;">38</div>
<div class="ln" style="left:505.6px;top:486.5px"></div>
<div class="num" style="left:413px;top:512.1px;">39</div>
<div class="ln" style="left:505.6px;top:512.1px"><span class="p">&lt;</span><span class="tg">script</span> <span class="at">setup</span> <span class="at">lang</span>=<span class="s">"ts"</span><span class="p">&gt;</span></div>
<div class="num" style="left:413px;top:537.7px;">40</div>
<div class="ln" style="left:505.6px;top:537.7px"><span class="im">import</span> <span class="b1">{</span> <span class="at">ref</span> <span class="b1">}</span> <span class="im">from</span> <span class="s">"vue"</span>;</div>
<div class="num" style="left:413px;top:563.3px;">41</div>
<div class="ln" style="left:505.6px;top:563.3px"></div>
<div class="num" style="left:413px;top:588.9px;">42</div>
<div class="ln" style="left:505.6px;top:588.9px"><span class="k">const</span> <span class="v">items</span> = <span class="f">ref</span><span class="b1">(</span><span class="b2">[</span></div>
<div class="num" style="left:413px;top:614.5px;">43</div>
<div class="ln" style="left:505.6px;top:614.5px">  <span class="b3">{</span></div>
<div class="num" style="left:413px;top:640.1px;">44</div>
<div class="ln" style="left:505.6px;top:640.1px">    <span class="at">bookName</span>: <span class="s">"<span class="c">计算机网络</span>"</span>,</div>
<div class="num" style="left:413px;top:665.7px;">45</div>
<div class="ln" style="left:505.6px;top:665.7px">    <span class="at">press</span>: <span class="s">"<span class="c">清华社</span>"</span>,</div>
<div class="num" style="left:413px;top:691.3px;">46</div>
<div class="ln" style="left:505.6px;top:691.3px">    <span class="at">author</span>: <span class="s">"<span class="c">张功萱</span>"</span>,</div>
<div class="num" style="left:413px;top:716.9px;">47</div>
<div class="ln" style="left:505.6px;top:716.9px">  <span class="b3">}</span>,</div>
<div class="num" style="left:413px;top:742.5px;">48</div>
<div class="ln" style="left:505.6px;top:742.5px">  <span class="b3">{</span></div>
<div class="num" style="left:413px;top:179.3px;">26</div>
<div class="ln" style="left:505.6px;top:179.3px">    <span class="p">&lt;/</span><span class="tg">p</span><span class="p">&gt;</span></div>
<div class="a" style="left:504px;top:382px;width:846px;height:1px;background:#2a2a2a;"></div>
<div class="a" style="left:504px;top:408px;width:846px;height:1px;background:#2a2a2a;"></div>
<div class="a" style="left:504.5px;top:204px;width:1px;height:255px;background:#404040;"></div>
<div class="a" style="left:526px;top:255px;width:1px;height:178px;background:#404040;"></div>
<div class="a" style="left:548px;top:382px;width:1px;height:26px;background:#707070;"></div>
<div class="a" style="left:526px;top:638px;width:1px;height:76px;background:#404040;"></div>
<div class="a" style="left:504.5px;top:613px;width:1px;height:130px;background:#404040;"></div>
<div class="a" style="left:1011px;top:383px;width:21px;height:25px;border:1px solid #808080"></div>
<div class="a" style="left:1151px;top:383px;width:21px;height:25px;border:1px solid #808080"></div>
<svg class="a" style="left:543px;top:364px" width="12" height="22" viewBox="0 0 12 22"><path d="M2 1.5h3l1 1 1-1h3M6 2.5v17M2 20.5h3l1-1 1 1h3" stroke="#000" stroke-width="2.4" fill="none"/><path d="M2 1.5h3l1 1 1-1h3M6 2.5v17M2 20.5h3l1-1 1 1h3" stroke="#fff" stroke-width="1.1" fill="none"/></svg>
<div class="a" style="left:414px;top:142px;width:946px;height:53px;background:#1f1f1f;"></div>
<div class="a" style="left:414px;top:194px;width:946px;height:4px;background:linear-gradient(#000a,#0000)"></div>
<div class="num" style="left:413px;top:143.8px;">1</div>
<div class="ln" style="left:505.6px;top:143.8px"><span class="p">&lt;</span><span class="tg">template</span><span class="p">&gt;</span></div>
<div class="num" style="left:413px;top:169.4px;">22</div>
<div class="ln" style="left:505.6px;top:169.4px">  <span class="p">&lt;</span><span class="tg">fieldset</span><span class="p">&gt;</span></div>
<div class="a" style="left:1352px;top:142px;width:100px;height:618px;background:#1f1f1f;"></div>
<div class="a" style="left:1350px;top:142px;width:8px;height:615px;background:linear-gradient(90deg,#0000,#0003)"></div><div class="a" style="left:1435px;top:142px;width:17px;height:615px;background:#1c1c1c;"></div>
<div class="a" style="left:1360px;top:143px;width:76px;height:143px;overflow:hidden;opacity:1"><div style="position:absolute;left:0;top:0;transform:scaleX(0.68);transform-origin:0 0;font-family:'Liberation Mono',monospace;font-size:2.2px;line-height:1.9px;white-space:pre;color:#e0e0e0;filter:brightness(1.25)"><div style="height:1.9px"><span class="p">&lt;</span><span class="tg">template</span><span class="p">&gt;</span></div><div style="height:1.9px">  <span class="p">&lt;</span><span class="tg">fieldset</span><span class="p">&gt;</span></div><div style="height:1.9px">    <span class="p">&lt;</span><span class="tg">legend</span><span class="p">&gt;</span><span class="c">数组遍历</span><span class="p">&lt;/</span><span class="tg">legend</span><span class="p">&gt;</span></div><div style="height:1.9px">    <span class="p">&lt;</span><span class="tg">ul</span><span class="p">&gt;</span></div><div style="height:1.9px">      <span class="p">&lt;</span><span class="tg">li</span> <span class="at">v-for</span>=<span class="s">"item in items"</span> <span class="at">:key</span>=<span class="s">"item.bookName"</span><span class="p">&gt;</span>{{ item.bookName }}--{{ item.press }}--{{ item.author }}<span class="p">&lt;/</span><span class="tg">li</span><span class="p">&gt;</span></div><div style="height:1.9px">    <span class="p">&lt;/</span><span class="tg">ul</span><span class="p">&gt;</span></div><div style="height:1.9px">  <span class="p">&lt;/</span><span class="tg">fieldset</span><span class="p">&gt;</span></div><div style="height:1.9px">  <span class="p">&lt;</span><span class="tg">fieldset</span><span class="p">&gt;</span></div><div style="height:1.9px">    <span class="p">&lt;</span><span class="tg">legend</span><span class="p">&gt;</span><span class="c">对象遍历</span><span class="p">&lt;/</span><span class="tg">legend</span><span class="p">&gt;</span></div><div style="height:1.9px">    <span class="p">&lt;</span><span class="tg">p</span> <span class="at">v-for</span>=<span class="s">"(value, key, index) in teacher"</span><span class="p">&gt;</span></div><div style="height:1.9px">      {{ index }}--{{ key }}--{{ value }}</div><div style="height:1.9px">    <span class="p">&lt;/</span><span class="tg">p</span><span class="p">&gt;</span></div><div style="height:1.9px">  <span class="p">&lt;/</span><span class="tg">fieldset</span><span class="p">&gt;</span></div><div style="height:1.9px">  <span class="p">&lt;</span><span class="tg">fieldset</span><span class="p">&gt;</span></div><div style="height:1.9px">    <span class="p">&lt;</span><span class="tg">legend</span><span class="p">&gt;</span><span class="c">数组遍历</span><span class="p">&lt;/</span><span class="tg">legend</span><span class="p">&gt;</span></div><div style="height:1.9px">    <span class="p">&lt;</span><span class="tg">span</span> <span class="at">v-for</span>=<span class="s">"(item, index) in array"</span><span class="p">&gt;</span>{{ item }} <span class="p">&lt;/</span><span class="tg">span</span><span class="p">&gt;</span></div><div style="height:1.9px">  <span class="p">&lt;/</span><span class="tg">fieldset</span><span class="p">&gt;</span></div><div style="height:1.9px">  <span class="p">&lt;</span><span class="tg">fieldset</span><span class="p">&gt;</span></div><div style="height:1.9px">    <span class="p">&lt;</span><span class="tg">legend</span><span class="p">&gt;</span><span class="c">数字遍历</span><span class="p">&lt;/</span><span class="tg">legend</span><span class="p">&gt;</span></div><div style="height:1.9px">    <span class="p">&lt;</span><span class="tg">span</span> <span class="at">v-for</span>=<span class="s">"n in 10"</span><span class="p">&gt;</span>{{ n }}<span class="p">&lt;/</span><span class="tg">span</span><span class="p">&gt;</span></div><div style="height:1.9px">  <span class="p">&lt;/</span><span class="tg">fieldset</span><span class="p">&gt;</span></div><div style="height:1.9px">  <span class="p">&lt;</span><span class="tg">fieldset</span><span class="p">&gt;</span></div><div style="height:1.9px">    <span class="p">&lt;</span><span class="tg">legend</span><span class="p">&gt;</span><span class="c">字符串遍历</span><span class="p">&lt;/</span><span class="tg">legend</span><span class="p">&gt;</span></div><div style="height:1.9px">    <span class="p">&lt;</span><span class="tg">p</span> <span class="at">v-for</span>=<span class="s">"(c, i) in 'hello'"</span><span class="p">&gt;</span></div><div style="height:1.9px">      {{ i }}--{{ c }}</div><div style="height:1.9px">    <span class="p">&lt;/</span><span class="tg">p</span><span class="p">&gt;</span></div><div style="height:1.9px">  <span class="p">&lt;/</span><span class="tg">fieldset</span><span class="p">&gt;</span></div><div style="height:1.9px">  <span class="p">&lt;</span><span class="tg">fieldset</span><span class="p">&gt;</span></div><div style="height:1.9px">    <span class="p">&lt;</span><span class="tg">legend</span><span class="p">&gt;</span><span class="c">绑定</span>key<span class="c">对象数组遍历</span><span class="p">&lt;/</span><span class="tg">legend</span><span class="p">&gt;</span></div><div style="height:1.9px">    <span class="p">&lt;</span><span class="tg">label</span><span class="p">&gt;</span><span class="c">序号</span>:<span class="p">&lt;/</span><span class="tg">label</span><span class="p">&gt;&lt;</span><span class="tg">input</span> <span class="at">type</span>=<span class="s">"text"</span> <span class="at">v-model</span>=<span class="s">"id"</span> <span class="at">placeholder</span>=<span class="s">"<span class="c">输入序号</span>"</span> <span class="p">/&gt;</span></div><div style="height:1.9px">    <span class="p">&lt;</span><span class="tg">label</span><span class="p">&gt;</span><span class="c">姓名</span>:<span class="p">&lt;/</span><span class="tg">label</span><span class="p">&gt;&lt;</span><span class="tg">input</span> <span class="at">type</span>=<span class="s">"text"</span> <span class="at">v-model</span>=<span class="s">"name"</span> <span class="at">placeholder</span>=<span class="s">"<span class="c">输入姓名</span>"</span> <span class="p">/&gt;</span></div><div style="height:1.9px">    <span class="p">&lt;</span><span class="tg">button</span> <span class="at">type</span>=<span class="s">"button"</span> <span class="at">v-on:click</span>=<span class="s">"addStudent"</span><span class="p">&gt;</span><span class="c">添加学生名单</span><span class="p">&lt;/</span><span class="tg">button</span><span class="p">&gt;</span></div><div style="height:1.9px">    <span class="p">&lt;</span><span class="tg">p</span> <span class="at">v-for</span>=<span class="s">"user in students"</span> <span class="at">:key</span>=<span class="s">"user.id"</span><span class="p">&gt;</span></div><div style="height:1.9px">      <span class="p">&lt;</span><span class="tg">input</span> <span class="at">type</span>=<span class="s">"checkbox"</span> <span class="p">/&gt;</span> {{ user.id }}--{{ user.name }}</div><div style="height:1.9px">    <span class="p">&lt;/</span><span class="tg">p</span><span class="p">&gt;</span></div><div style="height:1.9px">  <span class="p">&lt;/</span><span class="tg">fieldset</span><span class="p">&gt;</span></div><div style="height:1.9px"><span class="p">&lt;/</span><span class="tg">template</span><span class="p">&gt;</span></div><div style="height:1.9px"> </div><div style="height:1.9px"><span class="p">&lt;</span><span class="tg">script</span> <span class="at">setup</span> <span class="at">lang</span>=<span class="s">"ts"</span><span class="p">&gt;</span></div><div style="height:1.9px"><span class="im">import</span> { <span class="at">ref</span> } <span class="im">from</span> <span class="s">"vue"</span>;</div><div style="height:1.9px"> </div><div style="height:1.9px"><span class="k">const</span> <span class="v">items</span> = <span class="f">ref</span>([</div><div style="height:1.9px">  {</div><div style="height:1.9px">    <span class="at">bookName</span>: <span class="s">"<span class="c">计算机网络</span>"</span>,</div><div style="height:1.9px">    <span class="at">press</span>: <span class="s">"<span class="c">清华社</span>"</span>,</div><div style="height:1.9px">    <span class="at">author</span>: <span class="s">"<span class="c">张功萱</span>"</span>,</div><div style="height:1.9px">  },</div><div style="height:1.9px">  {</div><div style="height:1.9px">    <span class="at">bookName</span>: <span class="s">"<span class="c">数据结构</span>"</span>,</div><div style="height:1.9px">    <span class="at">press</span>: <span class="s">"<span class="c">清华社</span>"</span>,</div><div style="height:1.9px">    <span class="at">author</span>: <span class="s">"<span class="c">严蔚敏</span>"</span>,</div><div style="height:1.9px">  },</div><div style="height:1.9px">  {</div><div style="height:1.9px">    <span class="at">bookName</span>: <span class="s">"<span class="c">操作系统</span>"</span>,</div><div style="height:1.9px">    <span class="at">press</span>: <span class="s">"<span class="c">清华社</span>"</span>,</div><div style="height:1.9px">    <span class="at">author</span>: <span class="s">"<span class="c">王大松</span>"</span>,</div><div style="height:1.9px">  },</div><div style="height:1.9px">])</div><div style="height:1.9px"><span class="k">const</span> <span class="v">teacher</span> = <span class="f">ref</span>({</div><div style="height:1.9px">  <span class="at">name</span>: <span class="s">"<span class="c">储久良</span>"</span>,</div><div style="height:1.9px">  <span class="at">no</span>: <span class="s">"12004004"</span>,</div><div style="height:1.9px">  <span class="at">age</span>: <span class="n">56</span>,</div><div style="height:1.9px">})</div><div style="height:1.9px"><span class="k">const</span> <span class="v">array</span> = <span class="f">ref</span>([<span class="n">356</span>, <span class="n">324</span>, <span class="n">567</span>, <span class="n">789</span>]);</div><div style="height:1.9px"><span class="k">const</span> <span class="v">students</span> = <span class="f">ref</span>([</div><div style="height:1.9px">  { <span class="at">id</span>: <span class="n">1</span>, <span class="at">name</span>: <span class="s">"<span class="c">李春进</span>"</span> },</div><div style="height:1.9px">  { <span class="at">id</span>: <span class="n">2</span>, <span class="at">name</span>: <span class="s">"<span class="c">张大明</span>"</span> },</div><div style="height:1.9px">])</div><div style="height:1.9px"><span class="k">const</span> <span class="v">id</span> = <span class="f">ref</span>(<span class="n">0</span>)</div><div style="height:1.9px"><span class="k">const</span> <span class="v">name</span> = <span class="f">ref</span>(<span class="s">""</span>)</div><div style="height:1.9px"><span class="k">const</span> <span class="f">addStudent</span> = () =&gt; {</div><div style="height:1.9px">  <span class="v">students</span>.<span class="at">value</span>.<span class="f">unshift</span>({ <span class="at">id</span>: <span class="v">id</span>.<span class="at">value</span>, <span class="at">name</span>: <span class="v">name</span>.<span class="at">value</span> });</div><div style="height:1.9px">}</div><div style="height:1.9px"><span class="p">&lt;/</span><span class="tg">script</span><span class="p">&gt;</span></div><div style="height:1.9px"> </div></div></div>
<div class="a" style="left:1436px;top:291px;width:16px;height:150px;background:#454545;"></div>
<div class="a" style="left:1436px;top:350px;width:15px;height:3px;background:#a0a0a0;"></div>
<div class="a" style="left:504px;top:743px;width:776px;height:13px;background:#424242;"></div>
<div class="a" style="left:1451px;top:75px;width:1px;height:685px;background:#2b2b2b;"></div>
<div class="a" style="left:1452px;top:75px;width:438px;height:40px;background:#181818;"></div>
<div class="a" style="left:1452px;top:114px;width:438px;height:1px;background:#2b2b2b;"></div>
<div class="a" style="left:1452px;top:75px;width:152px;height:40px;background:#1f1f1f;"></div>
<div class="a" style="left:1603px;top:75px;width:1px;height:40px;background:#2b2b2b;"></div>
<svg class="a" style="left:1469px;top:88px" width="16" height="15" viewBox="0 0 16 15"><path d="M0 0h4.2L8 6.4 11.8 0H16L8 14z" fill="#8dc149"/><path d="M3.4 0h2.6L8 3.4 10 0h2.6L8 7.6z" fill="#5c7f2c"/></svg>
<div class="t " style="left:1489.0px;top:90.0px;font-size:14.5px;color:#a0a0a0;">Com3_4.vue</div>
<svg class="a" style="left:1579px;top:90px" width="12" height="12" viewBox="0 0 13 13"><path d="M1.5 1.5l10 10M11.5 1.5l-10 10" stroke="#a0a0a0" stroke-width="1.9"/></svg>
<div class="a" style="left:1853px;top:95px;width:3px;height:3px;background:#cccccc;border-radius:50%"></div>
<div class="a" style="left:1860px;top:95px;width:3px;height:3px;background:#cccccc;border-radius:50%"></div>
<div class="a" style="left:1867px;top:95px;width:3px;height:3px;background:#cccccc;border-radius:50%"></div>
<div class="a" style="left:1452px;top:115px;width:438px;height:645px;background:#1f1f1f;"></div>
<div class="t " style="left:1453.0px;top:123.3px;font-size:14.5px;color:#a9a9a9;">mponents</div>
<svg class="a" style="left:1525px;top:123px" width="9" height="14" viewBox="0 0 9 14"><path d="M2 2.5 6.5 7 2 11.5" stroke="#a0a0a0" stroke-width="1.3" fill="none"/></svg>
<svg class="a" style="left:1541px;top:124px" width="16" height="15" viewBox="0 0 16 15"><path d="M0 0h4.2L8 6.4 11.8 0H16L8 14z" fill="#8dc149"/><path d="M3.4 0h2.6L8 3.4 10 0h2.6L8 7.6z" fill="#5c7f2c"/></svg>
<div class="t " style="left:1561.0px;top:123.3px;font-size:14.5px;color:#a9a9a9;">Com3_4.vue</div>
<svg class="a" style="left:1646px;top:123px" width="9" height="14" viewBox="0 0 9 14"><path d="M2 2.5 6.5 7 2 11.5" stroke="#a0a0a0" stroke-width="1.3" fill="none"/></svg>
<div class="t " style="left:1662.5px;top:122.4px;font-size:15px;color:#c8c8c8;letter-spacing:0px;">{ }</div>
<div class="t " style="left:1684.0px;top:123.3px;font-size:14.5px;color:#a9a9a9;">script setup</div>
<svg class="a" style="left:1766px;top:123px" width="9" height="14" viewBox="0 0 9 14"><path d="M2 2.5 6.5 7 2 11.5" stroke="#a0a0a0" stroke-width="1.3" fill="none"/></svg>
<svg class="a" style="left:1781px;top:122px" width="18" height="16" viewBox="0 0 18 16"><path d="M4 2H2v12h2M14 2h2v12h-2" stroke="#75beff" stroke-width="1.5" fill="none"/><path d="M5 9l4-4 4 2-4 4z" stroke="#75beff" stroke-width="1.4" fill="none"/></svg>
<div class="t " style="left:1801.0px;top:123.3px;font-size:14.5px;color:#a9a9a9;">addStudent</div>
<div class="num" style="left:1449px;top:166.2px;">55</div>
<div class="ln" style="left:1541px;top:166.2px">    <span class="at">press</span>: <span class="s">"<span class="c">清华社</span>"</span>,</div>
<div class="num" style="left:1449px;top:191.8px;">56</div>
<div class="ln" style="left:1541px;top:191.8px">    <span class="at">author</span>: <span class="s">"<span class="c">王大松</span>"</span>,</div>
<div class="num" style="left:1449px;top:217.4px;">57</div>
<div class="ln" style="left:1541px;top:217.4px">  <span class="b3">}</span>,</div>
<div class="num" style="left:1449px;top:243.0px;">58</div>
<div class="ln" style="left:1541px;top:243.0px"><span class="b2">]</span><span class="b1">)</span></div>
<div class="num" style="left:1449px;top:268.6px;">59</div>
<div class="ln" style="left:1541px;top:268.6px"><span class="k">const</span> <span class="v">teacher</span> = <span class="f">ref</span><span class="b1">(</span><span class="b2">{</span></div>
<div class="num" style="left:1449px;top:294.2px;">60</div>
<div class="ln" style="left:1541px;top:294.2px">  <span class="at">name</span>: <span class="s">"<span class="c">储久良</span>"</span>,</div>
<div class="num" style="left:1449px;top:319.8px;">61</div>
<div class="ln" style="left:1541px;top:319.8px">  <span class="at">no</span>: <span class="s">"12004004"</span>,</div>
<div class="num" style="left:1449px;top:345.4px;">62</div>
<div class="ln" style="left:1541px;top:345.4px">  <span class="at">age</span>: <span class="n">56</span>,</div>
<div class="num" style="left:1449px;top:371.0px;">63</div>
<div class="ln" style="left:1541px;top:371.0px"><span class="b2">}</span><span class="b1">)</span></div>
<div class="num" style="left:1449px;top:396.6px;">64</div>
<div class="ln" style="left:1541px;top:396.6px"><span class="k">const</span> <span class="v">array</span> = <span class="f">ref</span><span class="b1">(</span><span class="b2">[</span><span class="n">356</span>, <span class="n">324</span>, <span class="n">5</span></div>
<div class="num" style="left:1449px;top:422.2px;">65</div>
<div class="ln" style="left:1541px;top:422.2px"><span class="k">const</span> <span class="v">students</span> = <span class="f">ref</span><span class="b1">(</span><span class="b2">[</span></div>
<div class="num" style="left:1449px;top:447.8px;">66</div>
<div class="ln" style="left:1541px;top:447.8px">  <span class="b3">{</span> <span class="at">id</span>: <span class="n">1</span>, <span class="at">name</span>: <span class="s">"<span class="c">李春进</span>"</span> <span class="b3">}</span>,</div>
<div class="num" style="left:1449px;top:473.4px;">67</div>
<div class="ln" style="left:1541px;top:473.4px">  <span class="b3">{</span> <span class="at">id</span>: <span class="n">2</span>, <span class="at">name</span>: <span class="s">"<span class="c">张大明</span>"</span> <span class="b3">}</span>,</div>
<div class="num" style="left:1449px;top:499.0px;">68</div>
<div class="ln" style="left:1541px;top:499.0px"><span class="b2">]</span><span class="b1">)</span></div>
<div class="num" style="left:1449px;top:524.6px;">69</div>
<div class="ln" style="left:1541px;top:524.6px"><span class="k">const</span> <span class="v">id</span> = <span class="f">ref</span><span class="b1">(</span><span class="n">0</span><span class="b1">)</span></div>
<div class="num" style="left:1449px;top:550.2px;">70</div>
<div class="ln" style="left:1541px;top:550.2px"><span class="k">const</span> <span class="v">name</span> = <span class="f">ref</span><span class="b1">(</span><span class="s">""</span><span class="b1">)</span></div>
<div class="num" style="left:1449px;top:575.8px;">71</div>
<div class="ln" style="left:1541px;top:575.8px"><span class="k">const</span> <span class="f">addStudent</span> = <span class="b1">()</span> <span class="k">=&gt;</span> <span class="b1">{</span></div>
<div class="num" style="left:1449px;top:601.4px;">72</div>
<div class="ln" style="left:1541px;top:601.4px">  <span class="v">students</span>.<span class="at">value</span>.<span class="f">unshift</span><span class="b2">(</span><span class="b3">{</span> <span class="at">id</span></div>
<div class="num" style="left:1449px;top:627.0px;color:#ffffff;">73</div>
<div class="ln" style="left:1541px;top:627.0px"><span class="b1">}</span></div>
<div class="num" style="left:1449px;top:652.6px;">74</div>
<div class="ln" style="left:1541px;top:652.6px"><span class="p">&lt;/</span><span class="tg">script</span><span class="p">&gt;</span></div>
<div class="num" style="left:1449px;top:678.2px;">75</div>
<div class="ln" style="left:1541px;top:678.2px"></div>
<div class="a" style="left:1540.5px;top:195px;width:1px;height:46px;background:#404040;"></div>
<div class="a" style="left:1562px;top:195px;width:1px;height:20px;background:#404040;"></div>
<div class="a" style="left:1540.5px;top:292px;width:1px;height:77px;background:#404040;"></div>
<div class="a" style="left:1540.5px;top:445px;width:1px;height:51px;background:#404040;"></div>
<div class="a" style="left:1540.5px;top:599px;width:1px;height:26px;background:#404040;"></div>
<div class="a" style="left:1452px;top:142px;width:384px;height:53px;background:#1f1f1f;"></div>
<div class="a" style="left:1452px;top:194px;width:384px;height:4px;background:linear-gradient(#000a,#0000)"></div>
<div class="num" style="left:1449px;top:143.8px;">39</div>
<div class="ln" style="left:1541px;top:143.8px"><span class="p">&lt;</span><span class="tg">script</span> <span class="at">setup</span> <span class="at">lang</span>=<span class="s">"ts"</span><span class="p">&gt;</span></div>
<div class="num" style="left:1449px;top:169.4px;">42</div>
<div class="ln" style="left:1541px;top:169.4px"><span class="k">const</span> <span class="v">items</span> = <span class="f">ref</span><span class="b1">(</span><span class="b2">[</span></div>
<div class="a" style="left:1836px;top:142px;width:54px;height:618px;background:#1f1f1f;"></div>
<div class="a" style="left:1844px;top:143px;width:30px;height:140px;overflow:hidden;opacity:1"><div style="position:absolute;left:0;top:0;transform:scaleX(0.68);transform-origin:0 0;font-family:'Liberation Mono',monospace;font-size:2.2px;line-height:1.9px;white-space:pre;color:#e0e0e0;filter:brightness(1.25)"><div style="height:1.9px"><span class="p">&lt;</span><span class="tg">template</span><span class="p">&gt;</span></div><div style="height:1.9px">  <span class="p">&lt;</span><span class="tg">fieldset</span><span class="p">&gt;</span></div><div style="height:1.9px">    <span class="p">&lt;</span><span class="tg">legend</span><span class="p">&gt;</span><span class="c">数组遍历</span><span class="p">&lt;/</span><span class="tg">legend</span><span class="p">&gt;</span></div><div style="height:1.9px">    <span class="p">&lt;</span><span class="tg">ul</span><span class="p">&gt;</span></div><div style="height:1.9px">      <span class="p">&lt;</span><span class="tg">li</span> <span class="at">v-for</span>=<span class="s">"item in items"</span> <span class="at">:key</span>=<span class="s">"item.bookName"</span><span class="p">&gt;</span>{{ item.bookName }}--{{ item.press }}--{{ item.author }}<span class="p">&lt;/</span><span class="tg">li</span><span class="p">&gt;</span></div><div style="height:1.9px">    <span class="p">&lt;/</span><span class="tg">ul</span><span class="p">&gt;</span></div><div style="height:1.9px">  <span class="p">&lt;/</span><span class="tg">fieldset</span><span class="p">&gt;</span></div><div style="height:1.9px">  <span class="p">&lt;</span><span class="tg">fieldset</span><span class="p">&gt;</span></div><div style="height:1.9px">    <span class="p">&lt;</span><span class="tg">legend</span><span class="p">&gt;</span><span class="c">对象遍历</span><span class="p">&lt;/</span><span class="tg">legend</span><span class="p">&gt;</span></div><div style="height:1.9px">    <span class="p">&lt;</span><span class="tg">p</span> <span class="at">v-for</span>=<span class="s">"(value, key, index) in teacher"</span><span class="p">&gt;</span></div><div style="height:1.9px">      {{ index }}--{{ key }}--{{ value }}</div><div style="height:1.9px">    <span class="p">&lt;/</span><span class="tg">p</span><span class="p">&gt;</span></div><div style="height:1.9px">  <span class="p">&lt;/</span><span class="tg">fieldset</span><span class="p">&gt;</span></div><div style="height:1.9px">  <span class="p">&lt;</span><span class="tg">fieldset</span><span class="p">&gt;</span></div><div style="height:1.9px">    <span class="p">&lt;</span><span class="tg">legend</span><span class="p">&gt;</span><span class="c">数组遍历</span><span class="p">&lt;/</span><span class="tg">legend</span><span class="p">&gt;</span></div><div style="height:1.9px">    <span class="p">&lt;</span><span class="tg">span</span> <span class="at">v-for</span>=<span class="s">"(item, index) in array"</span><span class="p">&gt;</span>{{ item }} <span class="p">&lt;/</span><span class="tg">span</span><span class="p">&gt;</span></div><div style="height:1.9px">  <span class="p">&lt;/</span><span class="tg">fieldset</span><span class="p">&gt;</span></div><div style="height:1.9px">  <span class="p">&lt;</span><span class="tg">fieldset</span><span class="p">&gt;</span></div><div style="height:1.9px">    <span class="p">&lt;</span><span class="tg">legend</span><span class="p">&gt;</span><span class="c">数字遍历</span><span class="p">&lt;/</span><span class="tg">legend</span><span class="p">&gt;</span></div><div style="height:1.9px">    <span class="p">&lt;</span><span class="tg">span</span> <span class="at">v-for</span>=<span class="s">"n in 10"</span><span class="p">&gt;</span>{{ n }}<span class="p">&lt;/</span><span class="tg">span</span><span class="p">&gt;</span></div><div style="height:1.9px">  <span class="p">&lt;/</span><span class="tg">fieldset</span><span class="p">&gt;</span></div><div style="height:1.9px">  <span class="p">&lt;</span><span class="tg">fieldset</span><span class="p">&gt;</span></div><div style="height:1.9px">    <span class="p">&lt;</span><span class="tg">legend</span><span class="p">&gt;</span><span class="c">字符串遍历</span><span class="p">&lt;/</span><span class="tg">legend</span><span class="p">&gt;</span></div><div style="height:1.9px">    <span class="p">&lt;</span><span class="tg">p</span> <span class="at">v-for</span>=<span class="s">"(c, i) in 'hello'"</span><span class="p">&gt;</span></div><div style="height:1.9px">      {{ i }}--{{ c }}</div><div style="height:1.9px">    <span class="p">&lt;/</span><span class="tg">p</span><span class="p">&gt;</span></div><div style="height:1.9px">  <span class="p">&lt;/</span><span class="tg">fieldset</span><span class="p">&gt;</span></div><div style="height:1.9px">  <span class="p">&lt;</span><span class="tg">fieldset</span><span class="p">&gt;</span></div><div style="height:1.9px">    <span class="p">&lt;</span><span class="tg">legend</span><span class="p">&gt;</span><span class="c">绑定</span>key<span class="c">对象数组遍历</span><span class="p">&lt;/</span><span class="tg">legend</span><span class="p">&gt;</span></div><div style="height:1.9px">    <span class="p">&lt;</span><span class="tg">label</span><span class="p">&gt;</span><span class="c">序号</span>:<span class="p">&lt;/</span><span class="tg">label</span><span class="p">&gt;&lt;</span><span class="tg">input</span> <span class="at">type</span>=<span class="s">"text"</span> <span class="at">v-model</span>=<span class="s">"id"</span> <span class="at">placeholder</span>=<span class="s">"<span class="c">输入序号</span>"</span> <span class="p">/&gt;</span></div><div style="height:1.9px">    <span class="p">&lt;</span><span class="tg">label</span><span class="p">&gt;</span><span class="c">姓名</span>:<span class="p">&lt;/</span><span class="tg">label</span><span class="p">&gt;&lt;</span><span class="tg">input</span> <span class="at">type</span>=<span class="s">"text"</span> <span class="at">v-model</span>=<span class="s">"name"</span> <span class="at">placeholder</span>=<span class="s">"<span class="c">输入姓名</span>"</span> <span class="p">/&gt;</span></div><div style="height:1.9px">    <span class="p">&lt;</span><span class="tg">button</span> <span class="at">type</span>=<span class="s">"button"</span> <span class="at">v-on:click</span>=<span class="s">"addStudent"</span><span class="p">&gt;</span><span class="c">添加学生名单</span><span class="p">&lt;/</span><span class="tg">button</span><span class="p">&gt;</span></div><div style="height:1.9px">    <span class="p">&lt;</span><span class="tg">p</span> <span class="at">v-for</span>=<span class="s">"user in students"</span> <span class="at">:key</span>=<span class="s">"user.id"</span><span class="p">&gt;</span></div><div style="height:1.9px">      <span class="p">&lt;</span><span class="tg">input</span> <span class="at">type</span>=<span class="s">"checkbox"</span> <span class="p">/&gt;</span> {{ user.id }}--{{ user.name }}</div><div style="height:1.9px">    <span class="p">&lt;/</span><span class="tg">p</span><span class="p">&gt;</span></div><div style="height:1.9px">  <span class="p">&lt;/</span><span class="tg">fieldset</span><span class="p">&gt;</span></div><div style="height:1.9px"><span class="p">&lt;/</span><span class="tg">template</span><span class="p">&gt;</span></div><div style="height:1.9px"> </div><div style="height:1.9px"><span class="p">&lt;</span><span class="tg">script</span> <span class="at">setup</span> <span class="at">lang</span>=<span class="s">"ts"</span><span class="p">&gt;</span></div><div style="height:1.9px"><span class="im">import</span> { <span class="at">ref</span> } <span class="im">from</span> <span class="s">"vue"</span>;</div><div style="height:1.9px"> </div><div style="height:1.9px"><span class="k">const</span> <span class="v">items</span> = <span class="f">ref</span>([</div><div style="height:1.9px">  {</div><div style="height:1.9px">    <span class="at">bookName</span>: <span class="s">"<span class="c">计算机网络</span>"</span>,</div><div style="height:1.9px">    <span class="at">press</span>: <span class="s">"<span class="c">清华社</span>"</span>,</div><div style="height:1.9px">    <span class="at">author</span>: <span class="s">"<span class="c">张功萱</span>"</span>,</div><div style="height:1.9px">  },</div><div style="height:1.9px">  {</div><div style="height:1.9px">    <span class="at">bookName</span>: <span class="s">"<span class="c">数据结构</span>"</span>,</div><div style="height:1.9px">    <span class="at">press</span>: <span class="s">"<span class="c">清华社</span>"</span>,</div><div style="height:1.9px">    <span class="at">author</span>: <span class="s">"<span class="c">严蔚敏</span>"</span>,</div><div style="height:1.9px">  },</div><div style="height:1.9px">  {</div><div style="height:1.9px">    <span class="at">bookName</span>: <span class="s">"<span class="c">操作系统</span>"</span>,</div><div style="height:1.9px">    <span class="at">press</span>: <span class="s">"<span class="c">清华社</span>"</span>,</div><div style="height:1.9px">    <span class="at">author</span>: <span class="s">"<span class="c">王大松</span>"</span>,</div><div style="height:1.9px">  },</div><div style="height:1.9px">])</div><div style="height:1.9px"><span class="k">const</span> <span class="v">teacher</span> = <span class="f">ref</span>({</div><div style="height:1.9px">  <span class="at">name</span>: <span class="s">"<span class="c">储久良</span>"</span>,</div><div style="height:1.9px">  <span class="at">no</span>: <span class="s">"12004004"</span>,</div><div style="height:1.9px">  <span class="at">age</span>: <span class="n">56</span>,</div><div style="height:1.9px">})</div><div style="height:1.9px"><span class="k">const</span> <span class="v">array</span> = <span class="f">ref</span>([<span class="n">356</span>, <span class="n">324</span>, <span class="n">567</span>, <span class="n">789</span>]);</div><div style="height:1.9px"><span class="k">const</span> <span class="v">students</span> = <span class="f">ref</span>([</div><div style="height:1.9px">  { <span class="at">id</span>: <span class="n">1</span>, <span class="at">name</span>: <span class="s">"<span class="c">李春进</span>"</span> },</div><div style="height:1.9px">  { <span class="at">id</span>: <span class="n">2</span>, <span class="at">name</span>: <span class="s">"<span class="c">张大明</span>"</span> },</div><div style="height:1.9px">])</div><div style="height:1.9px"><span class="k">const</span> <span class="v">id</span> = <span class="f">ref</span>(<span class="n">0</span>)</div><div style="height:1.9px"><span class="k">const</span> <span class="v">name</span> = <span class="f">ref</span>(<span class="s">""</span>)</div><div style="height:1.9px"><span class="k">const</span> <span class="f">addStudent</span> = () =&gt; {</div><div style="height:1.9px">  <span class="v">students</span>.<span class="at">value</span>.<span class="f">unshift</span>({ <span class="at">id</span>: <span class="v">id</span>.<span class="at">value</span>, <span class="at">name</span>: <span class="v">name</span>.<span class="at">value</span> });</div><div style="height:1.9px">}</div><div style="height:1.9px"><span class="p">&lt;/</span><span class="tg">script</span><span class="p">&gt;</span></div><div style="height:1.9px"> </div></div></div>
<div class="a" style="left:1876px;top:590px;width:12px;height:2px;background:#a0a0a0;"></div>
<div class="a" style="left:1837px;top:142px;width:1px;height:618px;background:#262626;"></div>
<div class="a" style="left:414px;top:757px;width:1476px;height:215px;background:#181818;"></div>
<div class="a" style="left:414px;top:757px;width:1476px;height:1px;background:#2b2b2b;"></div>
<div class="t " style="left:439.0px;top:771.9px;font-size:12.5px;color:#9d9d9d;letter-spacing:-0.6px;">PROBLEMS</div>
<div class="t " style="left:529.0px;top:771.9px;font-size:12.5px;color:#9d9d9d;letter-spacing:-0.6px;">OUTPUT</div>
<div class="t " style="left:605.0px;top:771.9px;font-size:12.5px;color:#9d9d9d;letter-spacing:-0.6px;">DEBUG CONSOLE</div>
<div class="t " style="left:733.0px;top:771.9px;font-size:12.5px;color:#e7e7e7;letter-spacing:-0.6px;">TERMINAL</div>
<div class="t " style="left:821.0px;top:771.9px;font-size:12.5px;color:#9d9d9d;letter-spacing:-0.6px;">PORTS</div>
<div class="a" style="left:731px;top:788px;width:65px;height:1.5px;background:#3a7bd5;"></div>
<div class="t mono" style="left:439px;top:812px;font-size:14px;color:#ccc;letter-spacing:-0.02px"><span style="color:#cccccc">09:03:34 </span><span style="color:#569cd6">[vite]</span> <span style="color:#8a8a8a">(client)</span> <span style="color:#3fc27a">hmr update</span> <span style="color:#cccccc">/src/components/Com3_4.vue</span> <span style="color:#d8d838">(x2)</span></div>
<div class="a" style="left:439px;top:829px;width:9px;height:19px;border:1.5px solid #d0d0d0"></div>
<div class="a" style="left:94px;top:972px;width:1796px;height:24px;background:#181818;"></div>
<div class="a" style="left:94px;top:972px;width:1796px;height:1px;background:#2b2b2b;"></div>
<div class="a" style="left:94px;top:972px;width:40px;height:24px;background:#3880dc;"></div>
<svg class="a" style="left:94px;top:966px" width="40" height="30" viewBox="0 0 40 30"><path d="M15 14.2 20 18.9 15 24.2M25 10.4 20.4 14.6 25 18.8" stroke="#e8f4ff" stroke-width="1.4" fill="none"/></svg>
<svg class="a" style="left:143px;top:976px" width="16" height="16" viewBox="0 0 16 16"><circle cx="8" cy="8" r="6.5" stroke="#ccc" stroke-width="1.2" fill="none"/><path d="M5.5 5.5l5 5M10.5 5.5l-5 5" stroke="#ccc" stroke-width="1.2"/></svg>
<div class="t " style="left:162.0px;top:977.1px;font-size:13.5px;color:#cccccc;">0</div>
<svg class="a" style="left:175px;top:975px" width="17" height="16" viewBox="0 0 17 16"><path d="M8.5 1.5 15.5 14.5h-14z" stroke="#ccc" stroke-width="1.2" fill="none"/><path d="M8.5 6v4.5M8.5 11.8v1.2" stroke="#ccc" stroke-width="1.2"/></svg>
<div class="t " style="left:194.0px;top:977.1px;font-size:13.5px;color:#cccccc;">0</div>
<svg class="a" style="left:223px;top:976px" width="14" height="16" viewBox="0 0 14 16"><path d="M9 1 2 9h4.5L4.5 15 12 6.5H7.5z" fill="#e8c83a"/></svg>
<div class="t " style="left:243.5px;top:977.1px;font-size:13.5px;color:#cccccc;letter-spacing:-0.3px;">BLACKBOX Chat</div>
<div class="t " style="left:361.5px;top:977.1px;font-size:13.5px;color:#cccccc;">Add Logs</div>
<svg class="a" style="left:439px;top:978px" width="18" height="14" viewBox="0 0 18 14"><path d="M2 8h8l6-5-1 3-3 3v4H3z" fill="#e8b82a"/></svg>
<div class="t " style="left:461.6px;top:977.1px;font-size:13.5px;color:#cccccc;">CyberCoder</div>
<div class="t " style="left:553.7px;top:977.1px;font-size:13.5px;color:#cccccc;">Improve Code</div>
<div class="t " style="left:660.0px;top:977.1px;font-size:13.5px;color:#cccccc;">Share Code Link</div>
<div class="t " style="left:1309.0px;top:977.1px;font-size:13.5px;color:#cccccc;">Ln 34, Col 63</div>
<div class="t " style="left:1407.0px;top:977.1px;font-size:13.5px;color:#cccccc;">Spaces</div>
<div class="a" style="left:94px;top:996px;width:1796px;height:44px;background:linear-gradient(90deg,#07090b,#08121a 50%,#0a161c)"></div>
<svg class="a" style="left:112px;top:1010px" width="20" height="20" viewBox="0 0 20 20"><path d="M0 2.8 8.2 1.7v7.8H0zM9.2 1.6 20 0v9.5H9.2zM0 10.5h8.2v7.8L0 17.2zM9.2 10.5H20V20L9.2 18.4z" fill="#fff"/></svg>
<svg class="a" style="left:167px;top:1007px" width="22" height="24" viewBox="0 0 22 24"><circle cx="12.5" cy="9.5" r="7" stroke="#e8e8e8" stroke-width="1.6" fill="none"/><path d="M7.5 14.5 1.5 21.5" stroke="#e8e8e8" stroke-width="1.8"/></svg>
<svg class="a" style="left:224px;top:1008px" width="22" height="22" viewBox="0 0 22 22"><rect x="1" y="5" width="13" height="11" stroke="#e8e8e8" stroke-width="1.5" fill="none"/><path d="M1 2h13M1 19h13M18 2v3M18 8v3M18 14v3" stroke="#e8e8e8" stroke-width="1.5"/></svg>
<div class="a" style="left:279px;top:1008px;width:24px;height:24px;background:linear-gradient(#8fb2c8,#6f94ad);border-radius:3px"></div><svg class="a" style="left:282px;top:1010px" width="18" height="20" viewBox="0 0 18 20"><circle cx="9" cy="10" r="8" fill="#f08a2c"/><path d="M6.5 5.5v9l7-4.5z" fill="#fff"/></svg>
<div class="a" style="left:338px;top:1006px;width:28px;height:27px;background:#1565e0;border-radius:6px"></div><div class="a" style="left:342px;top:1010px;width:20px;height:20px;border:2px solid #fff;border-radius:50%"></div><div class="t" style="left:347px;top:1012px;font-size:14px;font-weight:bold;color:#fff">K</div>
<div class="a" style="left:396px;top:1006px;width:28px;height:27px;background:#3a7de8;border-radius:5px"></div><svg class="a" style="left:399px;top:1009px" width="22" height="22" viewBox="0 0 22 22"><path d="M2 6c4 2 7 5 8 10 2-6 6-10 10-12-3 0-6 2-8 4C10 5 6 4 2 6z" fill="#fff"/></svg>
<div class="a" style="left:453px;top:1005px;width:28px;height:28px;background:#fff;border-radius:6px"></div><svg class="a" style="left:453px;top:1005px" width="28" height="28" viewBox="8 9 45 45"><path d="M27.7 16.3H49.1L46.3 39H34.2z" fill="#1ccad8"/><path d="M13.7 23H35.2L32.7 45.9H22L23.7 33.4H13z" fill="#1b6ef2"/><path d="M29.6 23H35.2L34 35H33z" fill="#1450d8"/></svg>
<div class="a" style="left:497px;top:996px;width:58px;height:44px;background:#262e32;"></div>
<svg class="a" style="left:514px;top:1006px" width="26" height="26" viewBox="0 0 100 100"><path d="M96 10.8 75.4 1 35.6 37.3 18.3 24.2 11.2 26.4v47.2l7.1 2.2 17.3-13.1L75.4 99 96 89.2V10.8zM75 27.8v44.4L45.6 50 75 27.8z" fill="#1f9cf0"/></svg>
<svg class="a" style="left:569px;top:1007px" width="28" height="24" viewBox="0 0 28 24"><path d="M1 3h9l2 2h15v17H1z" fill="#f0c94e"/><rect x="1" y="7" width="26" height="15" fill="#f7d877"/><rect x="9" y="15" width="10" height="7" fill="#3a8ed8"/></svg>
<svg class="a" style="left:627px;top:1006px" width="28" height="27" viewBox="0 0 28 27"><rect x="10" y="3" width="16" height="21" fill="#f4f4f4"/><path d="M12 8h11M12 12h11M12 16h11" stroke="#d04423" stroke-width="1.5"/><path d="M0 3 16 0v27L0 24z" fill="#d04423"/><text x="3" y="18" font-size="12" font-weight="bold" fill="#fff" font-family="Liberation Sans">P</text></svg>
<svg class="a" style="left:685px;top:1005px" width="28" height="28" viewBox="0 0 28 28"><path d="M14 1a13 13 0 0 1 11.3 6.5H14a6.5 6.5 0 0 0-5.9 3.8L4 4.8A13 13 0 0 1 14 1z" fill="#db4437"/><path d="M25.3 7.5A13 13 0 0 1 14.5 27l5.3-9.2A6.5 6.5 0 0 0 20.5 14a6.5 6.5 0 0 0-1.3-3.9z" fill="#f4c20d"/><path d="M14.5 27A13 13 0 0 1 4 4.8l4.1 6.5A6.5 6.5 0 0 0 14 20.5a6.5 6.5 0 0 0 5.8-2.7z" fill="#0f9d58"/><circle cx="14" cy="14" r="5.2" fill="#fff"/><circle cx="14" cy="14" r="4.2" fill="#4285f4"/></svg>
<svg class="a" style="left:1618px;top:1009px" width="22" height="22" viewBox="0 0 22 22"><circle cx="14" cy="5.5" r="3.5" stroke="#ddd" stroke-width="1.4" fill="none"/><circle cx="7" cy="10" r="3.5" stroke="#ddd" stroke-width="1.4" fill="none"/><path d="M1 20c0-4 3-6 6-6s6 2 6 6M11 10c1-1 2-1.5 3-1.5 3 0 6 2 6 6" stroke="#ddd" stroke-width="1.4" fill="none"/></svg>
<svg class="a" style="left:1661px;top:1013px" width="18" height="12" viewBox="0 0 18 12"><path d="M2 10 9 3l7 7" stroke="#ddd" stroke-width="1.5" fill="none"/></svg>
<svg class="a" style="left:1690px;top:1009px" width="22" height="22" viewBox="0 0 22 22"><path d="M3 19a16 16 0 0 1 16-16M7 19a12 12 0 0 1 12-12M11 19a8 8 0 0 1 8-8M15 19a4 4 0 0 1 4-4" stroke="#ddd" stroke-width="1.4" fill="none"/></svg>
<div class="t " style="left:1717.0px;top:1012.6px;font-size:17px;color:#e8e8e8;">英</div>
<div class="t " style="left:1767.0px;top:1002.1px;font-size:14px;color:#e8e8e8;">9:03</div>
<div class="t " style="left:1747.0px;top:1022.3px;font-size:15px;color:#e8e8e8;">2025/3/12</div>
<svg class="a" style="left:1838px;top:1008px" width="30" height="30" viewBox="0 0 30 30"><path d="M2 2h20v15H10l-4 4v-4H2z" fill="#e8e8e8"/><path d="M5 6h14M5 10h14M5 14h9" stroke="#222" stroke-width="1.5"/><circle cx="19" cy="21" r="7" fill="#333" stroke="#ddd" stroke-width="1.2"/><text x="15.5" y="25.5" font-size="11" font-weight="bold" fill="#fff" font-family="Liberation Sans">2</text></svg>
<div class="a" style="left:0;top:1040px;width:1920px;height:40px;background:linear-gradient(90deg,#22363e 0%,#24373f 35%,#22323e 70%,#1e2c3c 100%)"></div>
<svg class="a" style="left:12px;top:1051px" width="22" height="18" viewBox="0 0 22 18"><circle cx="2" cy="2" r="1.6" fill="#dfe7ee"/><circle cx="2" cy="9" r="1.6" fill="#dfe7ee"/><circle cx="2" cy="16" r="1.6" fill="#dfe7ee"/><path d="M6 2h15M6 9h15M6 16h15" stroke="#dfe7ee" stroke-width="2.6"/></svg>
<svg class="a" style="left:62px;top:1049px" width="22" height="24" viewBox="0 0 22 24"><path d="M7 0h8v12h6L11 24 1 12h6z" fill="#3a9df0"/></svg>
<div class="t " style="left:89.0px;top:1054.4px;font-size:12.5px;color:#f0f0f0;">下载</div>
<div class="a" style="left:55px;top:1077px;width:152px;height:3px;background:#7fb6de;"></div>
<svg class="a" style="left:223px;top:1049px" width="16" height="22" viewBox="0 0 16 22"><path d="M0 1h6l2 2h8v19H0z" fill="#f0c94e"/><path d="M0 4 12 6v16H0z" fill="#f8da80"/></svg>
<div class="t " style="left:249.0px;top:1053.5px;font-size:13px;color:#f0f0f0;">components</div>
<div class="a" style="left:215px;top:1077px;width:152px;height:3px;background:#7fb6de;"></div>
<div class="a" style="left:381px;top:1048px;width:24px;height:24px;background:#fff;border-radius:5px"></div><svg class="a" style="left:381px;top:1048px" width="24" height="24" viewBox="8 9 45 45"><path d="M27.7 16.3H49.1L46.3 39H34.2z" fill="#1ccad8"/><path d="M13.7 23H35.2L32.7 45.9H22L23.7 33.4H13z" fill="#1b6ef2"/><path d="M29.6 23H35.2L34 35H33z" fill="#1450d8"/></svg>
<div class="t " style="left:410.0px;top:1053.5px;font-size:13px;color:#f0f0f0;">ToDesk</div>
<div class="a" style="left:376px;top:1077px;width:152px;height:3px;background:#7fb6de;"></div>
<div class="a" style="left:532px;top:1040px;width:160px;height:40px;background:#46565e;"></div>
<div class="a" style="left:542px;top:1048px;width:24px;height:24px;background:#fff;border-radius:5px"></div><svg class="a" style="left:542px;top:1048px" width="24" height="24" viewBox="8 9 45 45"><path d="M27.7 16.3H49.1L46.3 39H34.2z" fill="#1ccad8"/><path d="M13.7 23H35.2L32.7 45.9H22L23.7 33.4H13z" fill="#1b6ef2"/><path d="M29.6 23H35.2L34 35H33z" fill="#1450d8"/></svg>
<div class="t " style="left:570.8px;top:1053.9px;font-size:12.5px;color:#f0f0f0;">DESKTOP-VM5DJ...</div>
<div class="a" style="left:532px;top:1077px;width:160px;height:3px;background:#7fb6de;"></div>
<svg class="a" style="left:703px;top:1048px" width="24" height="24" viewBox="0 0 28 28"><path d="M14 1a13 13 0 0 1 11.3 6.5H14a6.5 6.5 0 0 0-5.9 3.8L4 4.8A13 13 0 0 1 14 1z" fill="#db4437"/><path d="M25.3 7.5A13 13 0 0 1 14.5 27l5.3-9.2A6.5 6.5 0 0 0 20.5 14a6.5 6.5 0 0 0-1.3-3.9z" fill="#f4c20d"/><path d="M14.5 27A13 13 0 0 1 4 4.8l4.1 6.5A6.5 6.5 0 0 0 14 20.5a6.5 6.5 0 0 0 5.8-2.7z" fill="#0f9d58"/><circle cx="14" cy="14" r="5.2" fill="#fff"/><circle cx="14" cy="14" r="4.2" fill="#4285f4"/></svg>
<div class="t " style="left:730.0px;top:1053.5px;font-size:13px;color:#f0f0f0;">智慧山商 - Googl...</div>
<div class="a" style="left:697px;top:1077px;width:152px;height:3px;background:#7fb6de;"></div>
<svg class="a" style="left:1668px;top:1053px" width="16" height="12" viewBox="0 0 16 12"><path d="M2 9 8 3l6 6" stroke="#eee" stroke-width="1.5" fill="none"/></svg>
<svg class="a" style="left:1713px;top:1050px" width="20" height="20" viewBox="0 0 20 20"><rect x="1" y="3" width="14" height="10" stroke="#eee" stroke-width="1.4" fill="none"/><path d="M5 17h8M9 13v4M17 6v8" stroke="#eee" stroke-width="1.4"/></svg>
<div class="t " style="left:1740.0px;top:1053.3px;font-size:15px;color:#f0f0f0;">英</div>
<div class="a" style="left:1766px;top:1050px;width:20px;height:20px;background:#e8542e;border-radius:4px"></div><div class="t" style="left:1771px;top:1052px;font-size:15px;font-weight:bold;color:#fff;font-style:italic">S</div>
<div class="t " style="left:1817.0px;top:1043.6px;font-size:13.5px;color:#f0f0f0;">9:04</div>
<div class="t " style="left:1801.0px;top:1063.6px;font-size:13.5px;color:#f0f0f0;">2025/3/12</div>
<svg class="a" style="left:1877px;top:1049px" width="22" height="22" viewBox="0 0 22 22"><path d="M2 2h18v14H10l-4 4v-4H2z" stroke="#eee" stroke-width="1.4" fill="none"/></svg>
<svg class="a" style="left:106px;top:11px" width="21" height="21" viewBox="0 0 21 21"><circle cx="10.5" cy="10.5" r="10" fill="#2a64e8"/><circle cx="10.5" cy="8" r="4" fill="#fff"/><path d="M3.5 17c1.5-3.5 4-4.5 7-4.5s5.5 1 7 4.5a10 10 0 0 1-14 0z" fill="#fff"/></svg>
<div class="t " style="left:133.3px;top:14.9px;font-size:12.5px;color:#444444;">DESKTOP-VM5DJ2P</div>
<svg class="a" style="left:284px;top:13px" width="14" height="15" viewBox="0 0 14 15"><rect x="0" y="8" width="3" height="7" fill="#1db36c"/><rect x="4.5" y="4.5" width="3" height="10.5" fill="#1db36c"/><rect x="9" y="1" width="3" height="14" fill="#1db36c"/></svg>
<div class="t " style="left:302.0px;top:14.1px;font-size:14px;color:#1db36c;">1ms</div>
<div class="a" style="left:338px;top:13px;width:20px;height:15px;border:1.5px solid #1db36c;border-radius:2px"></div><div class="t" style="left:341px;top:16px;font-size:9px;font-weight:bold;color:#1db36c">HD</div>
<svg class="a" style="left:367px;top:14px" width="13" height="13" viewBox="0 0 13 13"><path d="M1.5 1.5l10 10M11.5 1.5l-10 10" stroke="#555" stroke-width="1.6"/></svg>
<svg class="a" style="left:407px;top:14px" width="14" height="14" viewBox="0 0 14 14"><path d="M7 1v12M1 7h12" stroke="#444" stroke-width="1.8"/></svg>
<div class="a" style="left:1813px;top:19px;width:15px;height:2px;background:#ffffff;"></div>
<div class="a" style="left:1841px;top:14px;width:12px;height:12px;border:2px solid #fff"></div>
<svg class="a" style="left:1869px;top:13px" width="14" height="14" viewBox="0 0 14 14"><path d="M1.5 1.5l11 11M12.5 1.5l-11 11" stroke="#fff" stroke-width="2"/></svg>
<div class="a" style="left:1890px;top:170px;width:30px;height:870px;background:linear-gradient(#0a3fc4,#1a2a70 50%,#141a3a);"></div>
<div class="a" style="left:1905px;top:870px;width:15px;height:160px;background:#1f50d8;"></div>
<div class="a" style="left:1442px;top:761px;width:446px;height:235px;background:#ffffff;border-radius:0 0 6px 6px;box-shadow:0 0 4px #0004;overflow:hidden"><div class="a" style="left:0;top:151px;width:446px;height:84px;background:#f3f4f6"></div></div>
<div class="a" style="left:1414px;top:762px;width:28px;height:37px;background:linear-gradient(90deg,#5a8ef0,#2f6ae8);border-radius:19px 0 0 19px"></div><svg class="a" style="left:1424px;top:772px" width="12" height="16" viewBox="0 0 12 16"><path d="M3 2.5 8.5 8 3 13.5" stroke="#fff" stroke-width="2" fill="none"/></svg>
<svg class="a" style="left:1460.5px;top:773px" width="19" height="17" viewBox="13 16 36 31"><path d="M27.7 16.3H49.1L46.3 39H34.2z" fill="#1ccad8"/><path d="M13.7 23H35.2L32.7 45.9H22L23.7 33.4H13z" fill="#1b6ef2"/><path d="M29.6 23H35.2L34 35H33z" fill="#1450d8"/></svg>
<div class="t " style="left:1483.5px;top:772.7px;font-size:17.5px;color:#2a5ec4;letter-spacing:0.3px;">ToDesk</div>
<svg class="a" style="left:1462px;top:818px" width="78" height="78" viewBox="0 0 78 78"><circle cx="38" cy="38" r="37" fill="#3a6ee8"/><path d="M38 16c-8 0-13 6-13 15 0 7 3 12 7 15v4c-9 2-16 7-19 14a37 37 0 0 0 50 0c-3-7-10-12-19-14v-4c4-3 7-8 7-15 0-9-5-15-13-15z" fill="#fff"/><circle cx="64" cy="64" r="8" fill="#2ec08a"/><rect x="59" y="61" width="10" height="6" rx="2" stroke="#fff" stroke-width="1.5" fill="none"/></svg>
<div class="t " style="left:1554.5px;top:823.6px;font-size:20px;color:#333333;font-weight:bold;letter-spacing:0.7px;">201Teac...</div>
<div class="a" style="left:1671px;top:826px;width:49px;height:18px;background:#36c5c8;border-radius:4px"></div><div class="t " style="left:1674.0px;top:829.0px;font-size:13px;color:#ffffff;">个人版</div>
<svg class="a" style="left:1736px;top:825px" width="18" height="18" viewBox="0 0 18 18"><path d="M4 1 7 5 5 7c1 3 3 5 6 6l2-2 4 3-2 3C8 17 1 10 1 3z" fill="#22b05a"/></svg><svg class="a" style="left:1765px;top:826px" width="16" height="16" viewBox="0 0 16 16"><path d="M1 1l14 6-6 2-2 6z" fill="#8ab8f0"/></svg>
<div class="t " style="left:1554.0px;top:852.3px;font-size:15px;color:#8a8a8a;letter-spacing:0.45px;">设备代码:957 784 642</div>
<div class="t " style="left:1554.0px;top:874.3px;font-size:15px;color:#8a8a8a;letter-spacing:0.65px;">版本: V4.7.6.3</div>
<div class="a" style="left:1812px;top:843px;width:56px;height:28px;background:#ef5a4a;border-radius:4px"></div><div class="t " style="left:1826.0px;top:850.6px;font-size:13.5px;color:#ffffff;">断开</div>
<div class="t " style="left:1458.0px;top:928.8px;font-size:15px;color:#555555;letter-spacing:0.8px;">允许访问:</div>
<div class="a" style="left:1791px;top:920px;width:77px;height:30px;background:#fafbfc;border:1px solid #d8dce2;border-radius:4px"></div><div class="t " style="left:1802.0px;top:928.6px;font-size:14px;color:#2f6fd8;">开启批注</div>
<div class="a" style="left:1458px;top:966px;width:15px;height:15px;background:#2f78e0;border-radius:2px"></div><svg class="a" style="left:1458px;top:966px" width="15" height="15" viewBox="0 0 15 15"><path d="M3.5 7.5 6.5 10.5 11.5 4.5" stroke="#fff" stroke-width="1.8" fill="none"/></svg><svg class="a" style="left:1479px;top:962px" width="26" height="22" viewBox="0 0 26 22"><path d="M1 7h5l7-6v20l-7-6H1z" fill="#9aa6b2"/><path d="M17 7a5 5 0 0 1 0 8M20 4a9 9 0 0 1 0 14" stroke="#9aa6b2" stroke-width="1.6" fill="none"/></svg><div class="t " style="left:1508.0px;top:967.2px;font-size:14.5px;color:#555555;">声音</div>
<div class="a" style="left:1566px;top:966px;width:15px;height:15px;background:#2f78e0;border-radius:2px"></div><svg class="a" style="left:1566px;top:966px" width="15" height="15" viewBox="0 0 15 15"><path d="M3.5 7.5 6.5 10.5 11.5 4.5" stroke="#fff" stroke-width="1.8" fill="none"/></svg><svg class="a" style="left:1585px;top:962px" width="26" height="24" viewBox="0 0 26 24"><rect x="1" y="1" width="24" height="17" rx="2" fill="#8e9aa6"/><path d="M5 7h2M10 7h2M15 7h2M5 12h13" stroke="#fff" stroke-width="1.6"/><path d="M17 12l8 4-3 1 2 4-2 1-2-4-2 2z" fill="#8e9aa6" stroke="#fff" stroke-width=".8"/></svg><div class="t " style="left:1613.0px;top:967.2px;font-size:14.5px;color:#555555;">键鼠</div>
<div class="a" style="left:1673px;top:966px;width:15px;height:15px;background:#2f78e0;border-radius:2px"></div><svg class="a" style="left:1673px;top:966px" width="15" height="15" viewBox="0 0 15 15"><path d="M3.5 7.5 6.5 10.5 11.5 4.5" stroke="#fff" stroke-width="1.8" fill="none"/></svg><svg class="a" style="left:1692px;top:962px" width="24" height="22" viewBox="0 0 24 22"><path d="M1 2h8l2 3h12v16H1z" fill="#9aa6b2"/><path d="M8 15h8" stroke="#fff" stroke-width="1.6"/></svg><div class="t " style="left:1723.0px;top:967.2px;font-size:14.5px;color:#555555;">文件</div>
<div class="a" style="left:1781px;top:966px;width:15px;height:15px;background:#2f78e0;border-radius:2px"></div><svg class="a" style="left:1781px;top:966px" width="15" height="15" viewBox="0 0 15 15"><path d="M3.5 7.5 6.5 10.5 11.5 4.5" stroke="#fff" stroke-width="1.8" fill="none"/></svg><svg class="a" style="left:1801px;top:961px" width="22" height="24" viewBox="0 0 22 24"><circle cx="11" cy="10" r="9" fill="#9aa6b2"/><circle cx="11" cy="10" r="4" fill="#fff"/><circle cx="11" cy="10" r="2" fill="#9aa6b2"/><rect x="5" y="20" width="12" height="3" fill="#9aa6b2"/></svg><div class="t " style="left:1831.0px;top:967.2px;font-size:14.5px;color:#555555;">摄像头</div>
<div class="a" style="left:1880px;top:168px;width:44px;height:700px;background:#1a1c20;border-radius:8px 0 0 8px"></div>
<svg class="a" style="left:1886px;top:182px" width="26" height="26" viewBox="0 0 26 26"><rect x="1" y="2" width="24" height="16" fill="#25b4e6"/><path d="M13 18v4M7 23h12" stroke="#d0d0d0" stroke-width="2"/></svg>
<div class="a" style="left:1886px;top:222px;width:26px;height:1.5px;background:#3a3c40"></div>
<svg class="a" style="left:1886px;top:236px" width="26" height="28" viewBox="0 0 26 28"><circle cx="13" cy="8" r="6" fill="#3ec7b0"/><path d="M1 27c0-7 5-11 12-11s12 4 12 11z" fill="#3ec7b0"/></svg>
<div class="a" style="left:1887px;top:280px;width:25px;height:23px;background:linear-gradient(#52b0f0,#2a88d8);border-radius:3px"></div><svg class="a" style="left:1893px;top:284px" width="14" height="14" viewBox="0 0 14 14"><path d="M3 12c0-5 3-7 7-7V2l4 4-4 4V7c-3 0-5 2-7 5z" fill="#fff"/></svg>
<div class="a" style="left:1888px;top:318px;width:24px;height:24px;background:linear-gradient(#6ac0f0,#2e8cd6);border-radius:3px;box-shadow:-2px -2px 0 #9ad4f4"></div><div class="a" style="left:1892px;top:324px;width:16px;height:2px;background:#fff;box-shadow:0 5px 0 #fff,0 10px 0 #fff"></div>
<div class="a" style="left:1887px;top:359px;width:26px;height:25px;background:linear-gradient(#d8283a 0 33%,#4060c8 33% 66%,#30a050 66%)"></div><div class="a" style="left:1897px;top:359px;width:6px;height:25px;background:#e8a838"></div><div class="a" style="left:1894px;top:367px;width:12px;height:8px;border:2px solid #f0f0f0"></div>
<div class="a" style="left:1888px;top:398px;width:24px;height:24px;background:#f6b21a;border-radius:3px"></div><div class="a" style="left:1891px;top:414px;width:18px;height:5px;background:#2a6ad0;border-radius:2px"></div>
<div class="a" style="left:1888px;top:437px;width:24px;height:24px;background:linear-gradient(#f4f8f4,#e0f0e0)"></div><svg class="a" style="left:1888px;top:437px" width="24" height="24" viewBox="0 0 24 24"><path d="M0 24V15c5-6 12-5 24 2v7z" fill="#52b04a"/><circle cx="18" cy="6" r="2.5" fill="#f08aa0"/></svg>
<div class="a" style="left:1888px;top:478px;width:24px;height:22px;background:#2a90e0;border-radius:2px"></div><svg class="a" style="left:1896px;top:483px" width="10" height="12" viewBox="0 0 10 12"><path d="M1 1v10l8-5z" fill="#fff"/></svg><div class="a" style="left:1888px;top:474px;width:22px;height:4px;background:repeating-linear-gradient(90deg,#fff 0 3px,#222 3px 5px)"></div>
<div class="a" style="left:1888px;top:518px;width:24px;height:24px;background:#4a4c50;border-radius:3px"></div><div class="a" style="left:1893px;top:529px;width:3px;height:3px;background:#ddd;border-radius:50%;box-shadow:6px 0 0 #ddd,12px 0 0 #ddd"></div>
<div class="a" style="left:1886px;top:558px;width:26px;height:1.5px;background:#3a3c40"></div>
<div class="a" style="left:1889px;top:580px;width:22px;height:3px;background:#4a4c50"></div>
<div class="t" style="left:1891px;top:588px;font-size:11px;color:#fff;letter-spacing:-0.6px">0°C</div>
<div class="a" style="left:1889px;top:619px;width:22px;height:3px;background:#4a4c50"></div>
<div class="t" style="left:1892px;top:628px;font-size:11px;color:#fff;letter-spacing:-0.6px">0%</div>
<svg class="a" style="left:1887px;top:654px" width="26" height="28" viewBox="0 0 26 28"><path d="M13 1 25 8v12L13 27 1 20V8z" fill="#4a6cf0"/><path d="M13 14 25 8v12L13 27z" fill="#e860a8"/><path d="M13 8 19 11.5v7L13 22 7 18.5v-7z" fill="#fff"/></svg>
<div class="a" style="left:1887px;top:694px;width:26px;height:26px;background:#c8d8f0;border-radius:5px"></div><svg class="a" style="left:1887px;top:694px" width="26" height="26" viewBox="0 0 26 26"><path d="M5 26c0-12 2-18 8-18s8 6 8 18z" fill="#3a2a22"/><ellipse cx="13" cy="14" rx="5.5" ry="7" fill="#f8dcc8"/><path d="M6 26c2-3 4-4 7-4s5 1 7 4z" fill="#222"/></svg>
<div class="a" style="left:1887px;top:735px;width:26px;height:20px;background:#2a9ad8"></div><svg class="a" style="left:1890px;top:738px" width="20" height="14" viewBox="0 0 20 14"><ellipse cx="10" cy="7" rx="8" ry="5" stroke="#0d3a60" stroke-width="2" fill="none"/><circle cx="10" cy="7" r="2.5" fill="#0d3a60"/></svg><div class="a" style="left:1899px;top:755px;width:2px;height:5px;background:#ccc"></div><div class="a" style="left:1893px;top:760px;width:14px;height:2px;background:#ccc"></div>
<svg class="a" style="left:1886px;top:774px" width="28" height="28" viewBox="0 0 28 28"><circle cx="12" cy="12" r="8.5" stroke="#f4901e" stroke-width="4" fill="none"/><path d="M18.5 18.5 25 25" stroke="#f4901e" stroke-width="4.5" stroke-linecap="round"/></svg>
<div class="a" style="left:1886px;top:815px;width:26px;height:1.5px;background:#3a3c40"></div>
<svg class="a" style="left:1886px;top:829px" width="28" height="28" viewBox="0 0 28 28"><path d="M12 1h4l1 3.5 3 1.3 3.3-1.8 2.8 2.8-1.8 3.3 1.3 3 3.5 1v4l-3.5 1-1.3 3 1.8 3.3-2.8 2.8-3.3-1.8-3 1.3-1 3.5h-4l-1-3.5-3-1.3-3.3 1.8-2.8-2.8 1.8-3.3-1.3-3L0 16v-4l3.5-1 1.3-3L3 4.7 5.8 1.9l3.3 1.8 3-1.3z" fill="#8a96a4"/><circle cx="14" cy="14" r="5" fill="#2a7ae8"/></svg>
<div class="a" style="left:143px;top:132px;width:62px;height:62px;background:#f2f4f6;border-radius:50%;box-shadow:0 1px 3px #0006"></div><svg class="a" style="left:143px;top:132px" width="62" height="62" viewBox="0 0 62 62"><path d="M27.7 16.3H49.1L46.3 39H34.2z" fill="#1ccad8"/><path d="M13.7 23H35.2L32.7 45.9H22L23.7 33.4H13z" fill="#1b6ef2"/><path d="M29.6 23H35.2L34 35H33z" fill="#1450d8"/></svg>
</body></html>
